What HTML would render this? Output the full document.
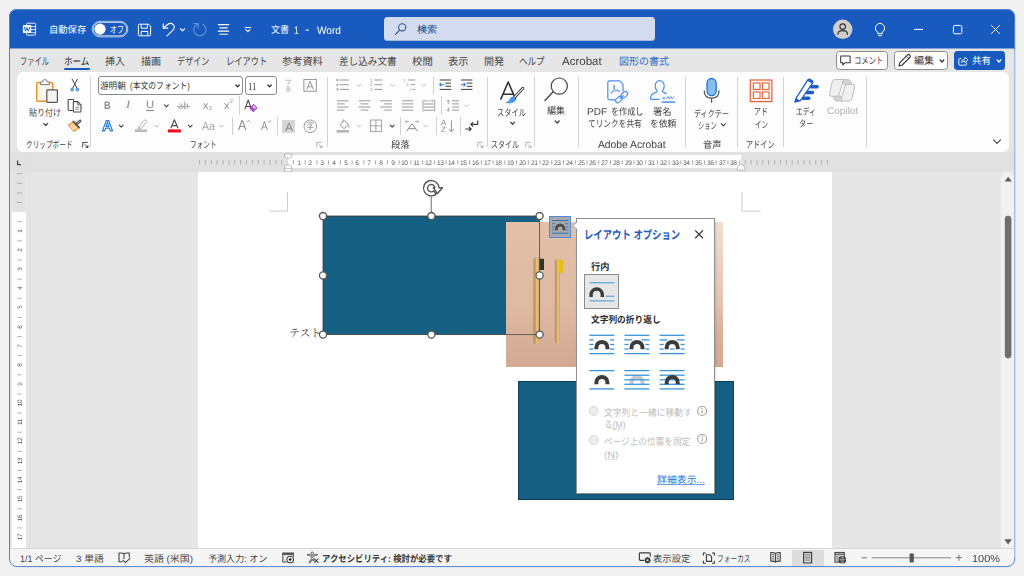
<!DOCTYPE html>
<html lang="ja"><head><meta charset="utf-8"><title>文書 1 - Word</title><style>
html,body{margin:0;padding:0;background:#f1f1f1;}
body{width:1024px;height:576px;overflow:hidden;font-family:"Liberation Sans",sans-serif;}
#page div,#page svg,#page span{position:absolute;box-sizing:border-box;}
#page{position:relative;}
#page svg{overflow:visible;display:block;}
.lt{will-change:transform;}
.lt text{white-space:pre;font-family:"Liberation Sans",sans-serif;text-rendering:geometricPrecision;}
.jt text{white-space:pre;font-family:"Liberation Sans","Noto Sans CJK JP",sans-serif;text-rendering:geometricPrecision;}
</style></head><body>
<div id="page" style="left:0px;top:0px;width:1024px;height:576px;background:#f1f1f1;overflow:hidden;">
<div id="window" style="left:9px;top:9px;width:1006px;height:558px;background:#e6e6e6;border-radius:8px;overflow:hidden;">
<div id="titlebar" style="left:0px;top:0px;width:1006px;height:39.4px;background:#185abd;">
<svg style="left:11px;top:11px" width="20" height="20" viewBox="20 20 20 20">
<rect x="26.6" y="23.2" width="9" height="12" rx="1.2" fill="none" stroke="#fff" stroke-width="0.9"/>
<path d="M31 26.6H35.4M31 29.6H35.4M31 32.7H35.4" stroke="#fff" stroke-width="0.8"/>
<rect x="22.9" y="25.1" width="8.3" height="8" rx="0.8" fill="#fff"/>
<path d="M24.4 27.2L25.6 31.2L27 27.6L28.4 31.2L29.7 27.2" fill="none" stroke="#185abd" stroke-width="1" stroke-linejoin="round" stroke-linecap="round"/>
</svg>
<svg class="jt" role="img" aria-label="自動保存" style="left:38px;top:13.27px" width="41.2" height="14.25" viewBox="47 22.27 41.2 14.25" fill="#fff"><text x="49" y="33.01" font-size="9.5" fill="#fff" text-anchor="start" textLength="37.2" lengthAdjust="spacingAndGlyphs">自動保存</text></svg>
<svg style="left:81px;top:10px" width="42" height="21" viewBox="90 19 42 21">
<rect x="92.1" y="21.25" width="35.8" height="15.7" rx="7.85" fill="none" stroke="#fff" stroke-opacity="0.85" stroke-width="0.7"/>
<rect x="93.2" y="22.35" width="33.6" height="13.5" rx="6.75" fill="none" stroke="#fff" stroke-width="0.8"/>
<circle cx="100.05" cy="29.1" r="5.6" fill="#fff"/></svg>
<svg class="jt" role="img" aria-label="オフ" style="left:99px;top:13.3px" width="18" height="14.4" viewBox="108 22.3 18 14.4" fill="#fff"><text x="110" y="33.15" font-size="9.6" fill="#fff" text-anchor="start" textLength="14" lengthAdjust="spacingAndGlyphs">オフ</text></svg>
<svg style="left:127px;top:13px" width="18" height="16" viewBox="136 22 18 16">
<path d="M139.6 24.2H148.6L150.6 26.2V34.6Q150.6 35.8 149.4 35.8H139.6Q138.4 35.8 138.4 34.6V25.4Q138.4 24.2 139.6 24.2Z" fill="none" stroke="#fff" stroke-width="1"/>
<path d="M141.2 24.4V28.2H147.4V24.4M141.2 35.6V31.4H147.8V35.6" fill="none" stroke="#fff" stroke-width="1"/></svg>
<svg style="left:151px;top:13px" width="28" height="16" viewBox="160 22 28 16">
<path d="M163.2 23.7V28.1H167.9" fill="none" stroke="#fff" stroke-width="1.1" stroke-linecap="round" stroke-linejoin="round"/>
<path d="M163.5 27.8L167.3 24.7Q170.8 22.2 173.2 24.6Q175.6 27.4 172.7 30.4L167 35.8" fill="none" stroke="#fff" stroke-width="1.1" stroke-linecap="round" stroke-linejoin="round"/><path d="M180.4 28.55L182.5 30.85L184.6 28.55" fill="none" stroke="#fff" stroke-width="1.15" stroke-linecap="round" stroke-linejoin="round"/></svg>
<svg style="left:183px;top:13px" width="16" height="16" viewBox="192 22 16 16">
<path d="M202.9 24.3A6.1 6.1 0 1 1 195.3 25.6L198 23.7" fill="none" stroke="#6a94d6" stroke-width="1.1" stroke-linecap="round" stroke-linejoin="round"/>
<path d="M193.7 23.5H198.2V28" fill="none" stroke="#6a94d6" stroke-width="1.1" stroke-linecap="round" stroke-linejoin="round"/>
</svg>
<svg style="left:207px;top:13px" width="16" height="16" viewBox="216 22 16 16"><path d="M218.4 24.6H228.7M219.9 27.85H227.3M218.4 31.05H228.7M219.9 34.25H227.3" stroke="#fff" stroke-width="1.2" stroke-linecap="round"/></svg>
<svg style="left:234px;top:16px" width="10" height="10" viewBox="243 25 10 10"><path d="M245.2 27.5H250.7" stroke="#fff" stroke-width="1.1" stroke-linecap="round"/><path d="M245.8 29.55L247.9 31.65L250 29.55" fill="none" stroke="#fff" stroke-width="1.1" stroke-linecap="round" stroke-linejoin="round"/></svg>
<svg class="jt" role="img" aria-label="文書" style="left:260.4px;top:13.3px" width="22.1" height="14.4" viewBox="269.4 22.3 22.1 14.4" fill="#fff"><text x="271.4" y="33.15" font-size="9.6" fill="#fff" text-anchor="start" textLength="18.1" lengthAdjust="spacingAndGlyphs">文書</text></svg>
<svg class="lt" style="left:282.95px;top:9.8px" width="12.76" height="21.8" viewBox="291.95 18.8 12.76 21.8"><text x="293.95" y="33.45" font-size="10.9" fill="#fff" text-anchor="start" textLength="4.77" lengthAdjust="spacingAndGlyphs">1</text></svg>
<svg class="lt" style="left:294.28px;top:9px" width="12.76" height="21.8" viewBox="303.28 18 12.76 21.8"><text x="305.28" y="32.65" font-size="10.9" fill="#fff" text-anchor="start" textLength="4.64" lengthAdjust="spacingAndGlyphs">-</text></svg>
<svg class="lt" style="left:305.86px;top:9.7px" width="32.78" height="21.6" viewBox="314.86 18.7 32.78 21.6"><text x="316.86" y="33.22" font-size="10.8" fill="#fff" text-anchor="start" textLength="23.99" lengthAdjust="spacingAndGlyphs">Word</text></svg>
<div style="left:375px;top:8px;width:270.6px;height:24.4px;background:#d2dcee;border-radius:3.5px;border-bottom:1px solid #a7b6d4;"></div>
<svg style="left:384px;top:13px" width="16" height="16" viewBox="393 22 16 16"><circle cx="402.2" cy="27.3" r="3.6" fill="none" stroke="#2a4f94" stroke-width="1.05"/>
<path d="M399.6 30.1L395.5 34.4" stroke="#2a4f94" stroke-width="1.15" stroke-linecap="round"/></svg>
<svg class="jt" role="img" aria-label="検索" style="left:406.4px;top:12.77px" width="24.2" height="14.85" viewBox="415.4 21.77 24.2 14.85" fill="#28467f"><text x="417.4" y="32.96" font-size="9.9" fill="#28467f" text-anchor="start" textLength="20.2" lengthAdjust="spacingAndGlyphs">検索</text></svg>
<svg style="left:822px;top:9px" width="24" height="24" viewBox="831 18 24 24"><circle cx="842.7" cy="29.3" r="9.7" fill="#d1cecb"/>
<circle cx="842.7" cy="26.6" r="2.8" fill="none" stroke="#333" stroke-width="1.15"/>
<path d="M837.9 34.4Q837.9 30.6 842.7 30.6Q847.5 30.6 847.5 34.4" fill="none" stroke="#333" stroke-width="1.15" stroke-linecap="round"/></svg>
<svg style="left:863px;top:12px" width="16" height="18" viewBox="872 21 16 18"><path d="M877.6 32.2Q875.4 30.6 875.4 28A4.6 4.6 0 0 1 884.6 28Q884.6 30.6 882.4 32.2V33.6H877.6Z" fill="none" stroke="#fff" stroke-width="1" stroke-linejoin="round"/>
<path d="M878.4 35.6H881.6" stroke="#fff" stroke-width="1" stroke-linecap="round"/></svg>
<svg style="left:901px;top:13px" width="96" height="16" viewBox="910 22 96 16"><path d="M914 29.4H923" stroke="#fff" stroke-width="1"/>
<rect x="953.4" y="25.4" width="8.4" height="8.4" rx="1.5" fill="none" stroke="#fff" stroke-width="1"/>
<path d="M991.2 25.2L999.8 33.8M999.8 25.2L991.2 33.8" stroke="#fff" stroke-width="1"/></svg>
</div>
<div id="tabs" style="left:0px;top:39.4px;width:1006px;height:24px;background:#e6e6e6;">
<svg class="jt" role="img" aria-label="ファイル" style="left:9px;top:4.6px" width="33" height="15.6" viewBox="18 53 33 15.6" fill="#444"><text x="20" y="64.75" font-size="10.4" fill="#444" text-anchor="start" textLength="29" lengthAdjust="spacingAndGlyphs">ファイル</text></svg>
<svg class="jt" role="img" aria-label="ホーム" style="left:53px;top:4.6px" width="29.4" height="15.6" viewBox="62 53 29.4 15.6" fill="#222"><text x="64" y="64.75" font-size="10.4" fill="#222" text-anchor="start" textLength="25.4" lengthAdjust="spacingAndGlyphs">ホーム</text></svg>
<svg class="jt" role="img" aria-label="挿入" style="left:94px;top:4.6px" width="24" height="15.6" viewBox="103 53 24 15.6" fill="#444"><text x="105" y="64.75" font-size="10.4" fill="#444" text-anchor="start" textLength="20" lengthAdjust="spacingAndGlyphs">挿入</text></svg>
<svg class="jt" role="img" aria-label="描画" style="left:130px;top:4.6px" width="24" height="15.6" viewBox="139 53 24 15.6" fill="#444"><text x="141" y="64.75" font-size="10.4" fill="#444" text-anchor="start" textLength="20" lengthAdjust="spacingAndGlyphs">描画</text></svg>
<svg class="jt" role="img" aria-label="デザイン" style="left:166px;top:4.6px" width="36.5" height="15.6" viewBox="175 53 36.5 15.6" fill="#444"><text x="177" y="64.75" font-size="10.4" fill="#444" text-anchor="start" textLength="32.5" lengthAdjust="spacingAndGlyphs">デザイン</text></svg>
<svg class="jt" role="img" aria-label="レイアウト" style="left:215.2px;top:4.6px" width="45.4" height="15.6" viewBox="224.2 53 45.4 15.6" fill="#444"><text x="226.2" y="64.75" font-size="10.4" fill="#444" text-anchor="start" textLength="41.4" lengthAdjust="spacingAndGlyphs">レイアウト</text></svg>
<svg class="jt" role="img" aria-label="参考資料" style="left:271.2px;top:4.6px" width="44.8" height="15.6" viewBox="280.2 53 44.8 15.6" fill="#444"><text x="282.2" y="64.75" font-size="10.4" fill="#444" text-anchor="start" textLength="40.8" lengthAdjust="spacingAndGlyphs">参考資料</text></svg>
<svg class="jt" role="img" aria-label="差し込み文書" style="left:328px;top:4.6px" width="61.6" height="15.6" viewBox="337 53 61.6 15.6" fill="#444"><text x="339" y="64.75" font-size="10.4" fill="#444" text-anchor="start" textLength="57.6" lengthAdjust="spacingAndGlyphs">差し込み文書</text></svg>
<svg class="jt" role="img" aria-label="校閲" style="left:401.2px;top:4.6px" width="24.8" height="15.6" viewBox="410.2 53 24.8 15.6" fill="#444"><text x="412.2" y="64.75" font-size="10.4" fill="#444" text-anchor="start" textLength="20.8" lengthAdjust="spacingAndGlyphs">校閲</text></svg>
<svg class="jt" role="img" aria-label="表示" style="left:437px;top:4.6px" width="24.4" height="15.6" viewBox="446 53 24.4 15.6" fill="#444"><text x="448" y="64.75" font-size="10.4" fill="#444" text-anchor="start" textLength="20.4" lengthAdjust="spacingAndGlyphs">表示</text></svg>
<svg class="jt" role="img" aria-label="開発" style="left:472.6px;top:4.6px" width="24" height="15.6" viewBox="481.6 53 24 15.6" fill="#444"><text x="483.6" y="64.75" font-size="10.4" fill="#444" text-anchor="start" textLength="20" lengthAdjust="spacingAndGlyphs">開発</text></svg>
<svg class="jt" role="img" aria-label="ヘルプ" style="left:508px;top:4.6px" width="29.6" height="15.6" viewBox="517 53 29.6 15.6" fill="#444"><text x="519" y="64.75" font-size="10.4" fill="#444" text-anchor="start" textLength="25.6" lengthAdjust="spacingAndGlyphs">ヘルプ</text></svg>
<div style="left:55px;top:19.8px;width:26px;height:1.9px;background:#185abd;border-radius:1px;"></div>
<svg class="lt" style="left:550.58px;top:1px" width="56.34" height="23.2" viewBox="559.58 49.4 56.34 23.2"><text x="561.58" y="64.99" font-size="11.6" fill="#444" text-anchor="start" textLength="39.71" lengthAdjust="spacingAndGlyphs">Acrobat</text></svg>
<svg class="jt" role="img" aria-label="図形の書式" style="left:608px;top:4.6px" width="54" height="15.6" viewBox="617 53 54 15.6" fill="#2f6bc4"><text x="619" y="64.75" font-size="10.4" fill="#2f6bc4" text-anchor="start" textLength="50" lengthAdjust="spacingAndGlyphs">図形の書式</text></svg>
<div style="left:0px;top:-0.4px;width:1006px;height:1px;background:#7fa0d1;"></div>
<div style="left:827px;top:2.6px;width:51.6px;height:18.6px;background:#fff;border:1px solid #8e8e8e;border-radius:3.5px;"></div>
<svg style="left:830px;top:5.6px" width="14" height="12" viewBox="839 54 14 12"><path d="M841.1 56H849.7Q850.1 56 850.1 56.4V62.4Q850.1 62.8 849.7 62.8H844.9L842.8 64.9V62.8H841.1Q840.7 62.8 840.7 62.4V56.4Q840.7 56 841.1 56Z" fill="none" stroke="#333" stroke-width="1.05" stroke-linejoin="round"/></svg>
<svg class="jt" role="img" aria-label="コメント" style="left:842.6px;top:5px" width="33.4" height="14.4" viewBox="851.6 53.4 33.4 14.4" fill="#333"><text x="853.6" y="64.25" font-size="9.6" fill="#333" text-anchor="start" textLength="29.4" lengthAdjust="spacingAndGlyphs">コメント</text></svg>
<div style="left:885px;top:2.6px;width:53.6px;height:18.6px;background:#fff;border:1px solid #8e8e8e;border-radius:3.5px;"></div>
<svg style="left:888px;top:4.6px" width="16" height="15" viewBox="897 53 16 15"><path d="M899 66L899.9 62.6L907.6 54.9Q908.6 53.9 909.8 55.1Q910.9 56.3 909.9 57.3L902.2 65Z" fill="none" stroke="#333" stroke-width="1.15" stroke-linejoin="round"/>
<path d="M906.4 56.2L908.7 58.5" stroke="#333" stroke-width="0.9"/></svg>
<svg class="jt" role="img" aria-label="編集" style="left:903px;top:4.7px" width="24" height="15" viewBox="912 53.1 24 15" fill="#333"><text x="914" y="64.4" font-size="10" fill="#333" text-anchor="start" textLength="20" lengthAdjust="spacingAndGlyphs">編集</text></svg>
<svg style="left:929px;top:8.6px" width="8" height="7" viewBox="938 57 8 7"><path d="M940.2 60L942 62L943.8 60" fill="none" stroke="#333" stroke-width="1.3" stroke-linecap="round" stroke-linejoin="round"/></svg>
<div style="left:945px;top:2.6px;width:51px;height:18.6px;background:#185abd;border-radius:3.5px;"></div>
<svg style="left:947px;top:5.6px" width="14" height="13" viewBox="956 54 14 13"><path d="M961 58.6H959.8Q958.8 58.6 958.8 59.6V64.2Q958.8 65.2 959.8 65.2H965.6Q966.6 65.2 966.6 64.2V63.2" fill="none" stroke="#fff" stroke-width="0.9" stroke-linecap="round"/>
<path d="M961.4 62.6Q961.8 59.2 965 59V57L968 60L965 62.8V61Q962.8 61 961.4 62.6Z" fill="none" stroke="#fff" stroke-width="0.8" stroke-linejoin="round"/></svg>
<svg class="jt" role="img" aria-label="共有" style="left:961px;top:4.77px" width="23" height="14.85" viewBox="970 53.17 23 14.85" fill="#fff"><text x="972" y="64.36" font-size="9.9" fill="#fff" text-anchor="start" textLength="19" lengthAdjust="spacingAndGlyphs">共有</text></svg>
<svg style="left:986px;top:8.6px" width="8" height="7" viewBox="995 57 8 7"><path d="M997.2 60L999 62L1000.8 60" fill="none" stroke="#fff" stroke-width="1.3" stroke-linecap="round" stroke-linejoin="round"/></svg>
</div>
<div id="ribbon" style="left:7.5px;top:63.4px;width:992px;height:80.1px;background:#fdfdfd;border-radius:6px;">
<svg style="left:17.5px;top:4.6px" width="26" height="28" viewBox="34 77 26 28">
<rect x="36.7" y="82.5" width="16" height="18.7" rx="1" fill="#fff7ea" stroke="#ef8f2b" stroke-width="1.4"/>
<path d="M40.4 84.6V82.6Q40.4 82 41 82H42.4Q42.6 79.6 44.9 79.6Q47.2 79.6 47.4 82H48.8Q49.4 82 49.4 82.6V84.6Z" fill="#fff" stroke="#777" stroke-width="1"/>
<rect x="46.8" y="89.8" width="10.6" height="12.6" rx="0.8" fill="#f3f3f3" stroke="#555" stroke-width="1.2"/></svg>
<svg class="jt" role="img" aria-label="貼り付け" style="left:10.1px;top:32.77px" width="36" height="14.25" viewBox="26.6 105.17 36 14.25" fill="#444"><text x="28.6" y="115.91" font-size="9.5" fill="#444" text-anchor="start" textLength="32" lengthAdjust="spacingAndGlyphs">貼り付け</text></svg>
<svg style="left:25.5px;top:48.6px" width="8" height="7" viewBox="42 121 8 7"><path d="M43.75 123.35L45.75 125.45L47.75 123.35" fill="none" stroke="#444" stroke-width="1.25" stroke-linecap="round" stroke-linejoin="round"/></svg>
<svg style="left:51.5px;top:5.6px" width="13" height="15" viewBox="68 78 13 15">
<path d="M72.2 79.2L77 88.3M77.4 79.2L72.6 88.3" stroke="#444" stroke-width="1" stroke-linecap="round"/>
<circle cx="72.1" cy="89.6" r="1.45" fill="#7ab8ea" stroke="#2f7fd8" stroke-width="0.8"/>
<circle cx="77.4" cy="89.6" r="1.45" fill="#7ab8ea" stroke="#2f7fd8" stroke-width="0.8"/></svg>
<svg style="left:50.5px;top:25.6px" width="16" height="15" viewBox="67 98 16 15">
<path d="M72.8 110.4H69.1Q68.2 110.4 68.2 109.5V100.3Q68.2 99.4 69.1 99.4H72.8Q73.7 99.4 73.7 100.3V101.3" fill="none" stroke="#444" stroke-width="1.05"/>
<path d="M73.3 102.4Q73.3 101.6 74.1 101.6H77.7L81 104.9V111.2Q81 112 80.2 112H74.1Q73.3 112 73.3 111.2Z" fill="#fff" stroke="#444" stroke-width="1.05" stroke-linejoin="round"/>
<path d="M77.7 101.8V104.9H80.8" fill="none" stroke="#444" stroke-width="0.8"/>
<path d="M75.3 107.3H79.1M75.3 109.2H79.1" stroke="#666" stroke-width="0.8"/></svg>
<svg style="left:50.5px;top:45.6px" width="16" height="15" viewBox="67 118 16 15">
<path d="M68.4 124.9L72.9 121.9L78.6 128.1L74 131.3Z" fill="#f9cf9c" stroke="#ef8f2b" stroke-width="1.1" stroke-linejoin="round"/>
<path d="M70.6 126.4L73.4 129.6" stroke="#fff" stroke-width="0.9"/>
<path d="M73.4 121.4L79.2 127.6" stroke="#444" stroke-width="1.5" stroke-linecap="round"/>
<path d="M76.8 123.8L80.1 120.9" stroke="#444" stroke-width="2.7" stroke-linecap="round"/>
<path d="M77.2 123.4L80 121" stroke="#e4e4e4" stroke-width="0.8" stroke-linecap="round"/></svg>
<svg class="jt" role="img" aria-label="クリップボード" style="left:7.5px;top:64.78px" width="50.6" height="14.25" viewBox="24 137.18 50.6 14.25" fill="#444"><text x="26" y="147.92" font-size="9.5" fill="#444" text-anchor="start" textLength="46.6" lengthAdjust="spacingAndGlyphs">クリップボード</text></svg>
<svg style="left:65.1px;top:69.2px" width="7" height="7" viewBox="81.6 141.6 7 7"><path d="M87.3 142H82.3V147" fill="none" stroke="#4a4a4a" stroke-width="1"/><path d="M84 143.6L87.2 146.8" fill="none" stroke="#4a4a4a" stroke-width="1"/><path d="M88 144.4V147.6H84.8Z" fill="#4a4a4a"/></svg>
<div style="left:73.5px;top:4.6px;width:1px;height:70.5px;background:#d2d2d2;"></div>
<div style="left:81.5px;top:3.2px;width:144.6px;height:19px;background:#fff;border:1px solid #8a8a8a;border-radius:3px;"></div>
<svg class="jt" role="img" aria-label="游明朝" style="left:81.7px;top:6.22px" width="29.8" height="13.95" viewBox="98.2 78.62 29.8 13.95" fill="#333"><text x="100.2" y="89.13" font-size="9.3" fill="#333" text-anchor="start" textLength="25.8" lengthAdjust="spacingAndGlyphs">游明朝</text></svg>
<svg class="jt" role="img" aria-label="(本文のフォント)" style="left:111.5px;top:6.22px" width="64" height="13.95" viewBox="128 78.62 64 13.95" fill="#333"><text x="130" y="89.13" font-size="9.3" fill="#333" text-anchor="start" textLength="60" lengthAdjust="spacingAndGlyphs">(本文のフォント)</text></svg>
<svg style="left:217.5px;top:10.6px" width="8" height="6" viewBox="234 83 8 6"><path d="M235.9 84.95L237.6 86.85L239.3 84.95" fill="none" stroke="#333" stroke-width="1.3" stroke-linecap="round" stroke-linejoin="round"/></svg>
<div style="left:228.9px;top:3.2px;width:31.2px;height:19px;background:#fff;border:1px solid #8a8a8a;border-radius:3px;"></div>
<svg class="lt" style="left:229.46px;top:2.2px" width="19.64" height="22" viewBox="245.96 74.6 19.64 22"><text x="247.96" y="89.38" font-size="11" fill="#333" text-anchor="start" textLength="8.45" lengthAdjust="spacingAndGlyphs" style="font-family:'Liberation Serif',serif;">11</text></svg>
<svg style="left:249.5px;top:10.6px" width="8" height="6" viewBox="266 83 8 6"><path d="M267.9 84.95L269.6 86.85L271.3 84.95" fill="none" stroke="#333" stroke-width="1.3" stroke-linecap="round" stroke-linejoin="round"/></svg>
<svg style="left:266.5px;top:5.6px" width="12" height="15" viewBox="283 78 12 15"><path d="M285.4 80.4H290.6Q290 82.6 288 83.6M288 82.4V85" fill="none" stroke="#b0b0b0" stroke-width="0.8"/>
<path d="M286 87H290.4M285.4 89H291M286 91H290.4M288.2 86.4V91" fill="none" stroke="#b0b0b0" stroke-width="0.7"/></svg>
<svg style="left:285.5px;top:4.6px" width="16" height="16" viewBox="302 77 16 16"><rect x="303.9" y="79.4" width="12.4" height="11.8" fill="none" stroke="#8a8a8a" stroke-width="0.9"/>
<path d="M306.8 89.4L310.1 81.2L313.4 89.4M307.9 86.8H312.3" fill="none" stroke="#8a8a8a" stroke-width="0.9"/></svg>
<svg class="lt" style="left:85.79px;top:21.4px" width="12.76" height="21.8" viewBox="102.29 93.8 12.76 21.8"><text x="104.29" y="108.45" font-size="10.9" fill="#8c8c8c" text-anchor="start" textLength="6.63" lengthAdjust="spacingAndGlyphs" style="font-weight:bold;">B</text></svg>
<svg class="lt" style="left:107.95px;top:21.1px" width="12.94" height="22.4" viewBox="124.45 93.5 12.94 22.4"><text x="126.45" y="108.55" font-size="11.2" fill="#8c8c8c" text-anchor="start" textLength="4.25" lengthAdjust="spacingAndGlyphs" style="font-style:italic;font-family:'Liberation Serif',serif;">I</text></svg>
<svg class="lt" style="left:127.63px;top:21.8px" width="12.57" height="21.2" viewBox="144.13 94.2 12.57 21.2"><text x="146.13" y="108.45" font-size="10.6" fill="#8c8c8c" text-anchor="start" textLength="8.14" lengthAdjust="spacingAndGlyphs">U</text></svg>
<div style="left:129.9px;top:37.2px;width:7.4px;height:0.8px;background:#8c8c8c;"></div>
<svg style="left:145.5px;top:29.6px" width="9" height="7" viewBox="162 102 9 7"><path d="M164.5 104.8L166.4 106.8L168.3 104.8" fill="none" stroke="#444" stroke-width="1.1" stroke-linecap="round" stroke-linejoin="round"/></svg>
<svg class="lt" style="left:159.9px;top:22.2px" width="18.9" height="20.8" viewBox="176.4 94.6 18.9 20.8"><text x="178.4" y="108.58" font-size="10.4" fill="#a4a4a4" text-anchor="start" textLength="10.39" lengthAdjust="spacingAndGlyphs">ab</text></svg>
<div style="left:160.9px;top:33.7px;width:12.6px;height:0.8px;background:#a4a4a4;"></div>
<svg class="lt" style="left:184.38px;top:21.2px" width="12.82" height="22" viewBox="200.88 93.6 12.82 22"><text x="202.88" y="108.38" font-size="11" fill="#8c8c8c" text-anchor="start" textLength="5.44" lengthAdjust="spacingAndGlyphs">x</text></svg>
<svg class="lt" style="left:190.24px;top:30.8px" width="9.35" height="10.8" viewBox="206.74 103.2 9.35 10.8"><text x="208.74" y="110.46" font-size="5.4" fill="#8c8c8c" text-anchor="start" textLength="2.93" lengthAdjust="spacingAndGlyphs">2</text></svg>
<svg class="lt" style="left:205.78px;top:21.2px" width="12.82" height="22" viewBox="222.28 93.6 12.82 22"><text x="224.28" y="108.38" font-size="11" fill="#8c8c8c" text-anchor="start" textLength="5.44" lengthAdjust="spacingAndGlyphs">x</text></svg>
<svg class="lt" style="left:211.44px;top:24.1px" width="9.35" height="10.8" viewBox="227.94 96.5 9.35 10.8"><text x="229.94" y="103.76" font-size="5.4" fill="#8c8c8c" text-anchor="start" textLength="2.93" lengthAdjust="spacingAndGlyphs">2</text></svg>
<div style="left:222.6px;top:23.6px;width:1px;height:18.6px;background:#d2d2d2;"></div>
<svg style="left:226.5px;top:25.6px" width="16" height="15" viewBox="243 98 16 15"><path d="M244.8 109.4L248.2 100L251.6 109.4M246 106.4H250.4" fill="none" stroke="#444" stroke-width="1.05" stroke-linejoin="round"/>
<path d="M250 108.2L253.6 104.6L256.8 107.8L253.2 111.4Z" fill="#fff" stroke="#a23cc4" stroke-width="1.1" stroke-linejoin="round"/>
<path d="M250 108.2L251.9 106.3L255.1 109.5L253.2 111.4Z" fill="#b455d3" stroke="#a23cc4" stroke-width="0.6" stroke-linejoin="round"/></svg>
<svg style="left:83.5px;top:45.6px" width="16" height="16" viewBox="100 118 16 16"><path d="M110.37 130.9L109.47 128.26L105.56 128.26L104.65 130.9L102.5 130.9L106.24 120.58L108.77 120.58L112.5 130.9ZM107.51 122.17L107.46 122.33Q107.39 122.59 107.29 122.93Q107.19 123.27 106.04 126.64L108.98 126.64L107.97 123.67L107.66 122.67Z" fill="#fff" stroke="#1f78d1" stroke-width="1.15" stroke-linejoin="round"/></svg>
<svg style="left:100.5px;top:49.6px" width="9" height="8" viewBox="117 122 9 8"><path d="M119.3 125.2L121.2 127.2L123.1 125.2" fill="none" stroke="#444" stroke-width="1.1" stroke-linecap="round" stroke-linejoin="round"/></svg>
<svg style="left:116.5px;top:45.6px" width="16" height="16" viewBox="133 118 16 16"><path d="M138.6 127.2L144 120.4Q145 119.4 146 120.4Q147 121.4 146.2 122.4L141 128.6Z" fill="none" stroke="#a8a8a8" stroke-width="0.9" stroke-linejoin="round"/>
<path d="M138.6 127.2L137.6 129.2H140.4L141 128.6" fill="none" stroke="#a8a8a8" stroke-width="0.9" stroke-linejoin="round"/>
<rect x="134.8" y="129.5" width="12.2" height="2.6" fill="#b9b9b9"/></svg>
<svg style="left:136.5px;top:49.6px" width="8" height="8" viewBox="153 122 8 8"><path d="M155.2 125.25L157 127.15L158.8 125.25" fill="none" stroke="#b4b4b4" stroke-width="0.9" stroke-linecap="round" stroke-linejoin="round"/></svg>
<svg style="left:149.5px;top:45.6px" width="16" height="16" viewBox="166 118 16 16"><path d="M170.8 128.3L174.4 119.8L178 128.3M172 125.6H176.8" fill="none" stroke="#444" stroke-width="1.05" stroke-linejoin="round"/>
<rect x="167.9" y="129.4" width="13" height="3.1" fill="#e8121d"/></svg>
<svg style="left:169.5px;top:49.6px" width="9" height="8" viewBox="186 122 9 8"><path d="M188.3 125.2L190.2 127.2L192.1 125.2" fill="none" stroke="#444" stroke-width="1.1" stroke-linecap="round" stroke-linejoin="round"/></svg>
<svg class="lt" style="left:183.08px;top:42px" width="20.63" height="23.6" viewBox="199.58 114.4 20.63 23.6"><text x="201.58" y="130.26" font-size="11.8" fill="#a6a6a6" text-anchor="start" textLength="12.82" lengthAdjust="spacingAndGlyphs">Aa</text></svg>
<svg style="left:200.5px;top:49.6px" width="8" height="8" viewBox="217 122 8 8"><path d="M219.4 125.25L221.2 127.15L223 125.25" fill="none" stroke="#b4b4b4" stroke-width="0.9" stroke-linecap="round" stroke-linejoin="round"/></svg>
<div style="left:215px;top:44.6px;width:1px;height:18px;background:#d2d2d2;"></div>
<svg class="lt" style="left:219.48px;top:38.5px" width="14.93" height="28.8" viewBox="235.98 110.9 14.93 28.8"><text x="237.98" y="130.25" font-size="14.4" fill="#8e8e8e" text-anchor="start" textLength="8.45" lengthAdjust="spacingAndGlyphs">A</text></svg>
<svg style="left:228.5px;top:45.6px" width="7" height="6" viewBox="245 118 7 6"><path d="M247 122.2L248.6 120.4L250.2 122.2" fill="none" stroke="#8e8e8e" stroke-width="0.8"/></svg>
<svg class="lt" style="left:242.08px;top:41.5px" width="13.56" height="24.4" viewBox="258.58 113.9 13.56 24.4"><text x="260.58" y="130.3" font-size="12.2" fill="#8e8e8e" text-anchor="start" textLength="6.84" lengthAdjust="spacingAndGlyphs">A</text></svg>
<svg style="left:249.5px;top:45.6px" width="7" height="6" viewBox="266 118 7 6"><path d="M268 120.6L269.5 122.3L271 120.6" fill="none" stroke="#8e8e8e" stroke-width="0.8"/></svg>
<div style="left:260px;top:44.6px;width:1px;height:18px;background:#d2d2d2;"></div>
<div style="left:265.5px;top:47.6px;width:13.2px;height:12.6px;background:#d6d6d6;"></div>
<svg class="lt" style="left:266.08px;top:42.4px" width="13.19" height="23.2" viewBox="282.58 114.8 13.19 23.2"><text x="284.58" y="130.39" font-size="11.6" fill="#8a8a8a" text-anchor="start" textLength="8.05" lengthAdjust="spacingAndGlyphs">A</text></svg>
<svg style="left:285.5px;top:45.6px" width="17" height="17" viewBox="302 118 17 17"><circle cx="310.3" cy="126.3" r="6.3" fill="none" stroke="#8c8c8c" stroke-width="0.9"/><path d="M307.4 123.6V122.8H313.2V123.6M310.3 121.6V122.8M308.4 124.8H312L310.4 126.2V129.6Q310.4 130.2 309.4 130M307.2 127.4H313.4" fill="none" stroke="#8c8c8c" stroke-width="0.75"/></svg>
<svg class="jt" role="img" aria-label="フォント" style="left:171.1px;top:64.78px" width="30.6" height="14.25" viewBox="187.6 137.18 30.6 14.25" fill="#444"><text x="189.6" y="147.92" font-size="9.5" fill="#444" text-anchor="start" textLength="26.6" lengthAdjust="spacingAndGlyphs">フォント</text></svg>
<svg style="left:299.5px;top:69.2px" width="7" height="7" viewBox="316 141.6 7 7"><path d="M321.7 142H316.7V147" fill="none" stroke="#b4b4b4" stroke-width="1"/><path d="M318.4 143.6L321.6 146.8" fill="none" stroke="#b4b4b4" stroke-width="1"/><path d="M322.4 144.4V147.6H319.2Z" fill="#b4b4b4"/></svg>
<div style="left:310px;top:4.6px;width:1px;height:70.5px;background:#d2d2d2;"></div>
<svg style="left:318.5px;top:5.6px" width="28" height="15" viewBox="335 78 28 15"><path d="M339.8 80H348.8" stroke="#9a9a9a" stroke-width="1"/><path d="M339.8 84.7H348.8" stroke="#9a9a9a" stroke-width="1"/><path d="M339.8 89.4H348.8" stroke="#9a9a9a" stroke-width="1"/><rect x="336.5" y="79.05" width="1.9" height="1.9" fill="#9a9a9a"/><rect x="336.5" y="83.75" width="1.9" height="1.9" fill="#9a9a9a"/><rect x="336.5" y="88.45" width="1.9" height="1.9" fill="#9a9a9a"/><path d="M357.1 84.4L359 86.4L360.9 84.4" fill="none" stroke="#b4b4b4" stroke-width="0.9" stroke-linecap="round" stroke-linejoin="round"/></svg>
<svg style="left:351.5px;top:5.6px" width="30" height="15" viewBox="368 78 30 15"><path d="M374.4 80H382.3" stroke="#9a9a9a" stroke-width="1"/><path d="M374.4 84.7H382.3" stroke="#9a9a9a" stroke-width="1"/><path d="M374.4 89.4H382.3" stroke="#9a9a9a" stroke-width="1"/><path d="M390.7 84.4L392.6 86.4L394.5 84.4" fill="none" stroke="#b4b4b4" stroke-width="0.9" stroke-linecap="round" stroke-linejoin="round"/></svg>
<svg class="lt" style="left:351.3px;top:3.2px" width="8.85" height="9.2" viewBox="367.8 75.6 8.85 9.2"><text x="369.8" y="81.78" font-size="4.6" fill="#a2a2a2" text-anchor="start">1</text></svg>
<svg class="lt" style="left:351.3px;top:7.9px" width="8.85" height="9.2" viewBox="367.8 80.3 8.85 9.2"><text x="369.8" y="86.48" font-size="4.6" fill="#a2a2a2" text-anchor="start">2</text></svg>
<svg class="lt" style="left:351.3px;top:12.6px" width="8.85" height="9.2" viewBox="367.8 85 8.85 9.2"><text x="369.8" y="91.18" font-size="4.6" fill="#a2a2a2" text-anchor="start">3</text></svg>
<svg style="left:385.5px;top:5.6px" width="28" height="15" viewBox="402 78 28 15"><path d="M407.8 80H415.2M410.6 84.7H415.2M412.2 89.4H415.2" stroke="#9a9a9a" stroke-width="1" fill="none"/><path d="M421.7 84.4L423.6 86.4L425.5 84.4" fill="none" stroke="#b4b4b4" stroke-width="0.9" stroke-linecap="round" stroke-linejoin="round"/></svg>
<svg class="lt" style="left:384.9px;top:3.2px" width="8.85" height="9.2" viewBox="401.4 75.6 8.85 9.2"><text x="403.4" y="81.78" font-size="4.6" fill="#a2a2a2" text-anchor="start">1</text></svg>
<svg class="lt" style="left:387.9px;top:7.7px" width="8.85" height="9.2" viewBox="404.4 80.1 8.85 9.2"><text x="406.4" y="86.28" font-size="4.6" fill="#a2a2a2" text-anchor="start">a</text></svg>
<svg class="lt" style="left:391.3px;top:12.4px" width="8.85" height="9.2" viewBox="407.8 84.8 8.85 9.2"><text x="409.8" y="90.98" font-size="4.6" fill="#a2a2a2" text-anchor="start">i</text></svg>
<div style="left:416.5px;top:4.6px;width:1px;height:17px;background:#d2d2d2;"></div>
<svg style="left:421.5px;top:5.6px" width="15" height="15" viewBox="438 78 15 15"><path d="M439.7 80H451.1" stroke="#444" stroke-width="1.05"/><path d="M439.7 89.4H451.1" stroke="#444" stroke-width="1.05"/><path d="M445.3 83.1H451.1" stroke="#444" stroke-width="1.05"/><path d="M445.3 86.3H451.1" stroke="#444" stroke-width="1.05"/><path d="M444.3 84.7H439.7M441.4 83L439.6 84.7L441.4 86.4" fill="none" stroke="#2f7fd8" stroke-width="1.05" stroke-linejoin="round"/></svg>
<svg style="left:442.5px;top:5.6px" width="15" height="15" viewBox="459 78 15 15"><path d="M461 80H472.4" stroke="#444" stroke-width="1.05"/><path d="M461 89.4H472.4" stroke="#444" stroke-width="1.05"/><path d="M466.6 83.1H472.4" stroke="#444" stroke-width="1.05"/><path d="M466.6 86.3H472.4" stroke="#444" stroke-width="1.05"/><path d="M460.8 84.7H465.2M463.6 83L465.4 84.7L463.6 86.4" fill="none" stroke="#2f7fd8" stroke-width="1.05" stroke-linejoin="round"/></svg>
<svg style="left:319.5px;top:25.6px" width="14" height="14" viewBox="336 98 14 14"><path d="M337 100.8H348.4" stroke="#9a9a9a" stroke-width="1"/><path d="M337 107H348.4" stroke="#9a9a9a" stroke-width="1"/><path d="M337 103.9H344.6" stroke="#9a9a9a" stroke-width="1"/><path d="M337 110.1H344.6" stroke="#9a9a9a" stroke-width="1"/></svg>
<svg style="left:340.5px;top:25.6px" width="14" height="14" viewBox="357 98 14 14"><path d="M358.6 100.8H370.4" stroke="#9a9a9a" stroke-width="1"/><path d="M358.6 107H370.4" stroke="#9a9a9a" stroke-width="1"/><path d="M360.6 103.9H368.4" stroke="#9a9a9a" stroke-width="1"/><path d="M360.6 110.1H368.4" stroke="#9a9a9a" stroke-width="1"/></svg>
<svg style="left:362.5px;top:25.6px" width="14" height="14" viewBox="379 98 14 14"><path d="M380.2 100.8H391.8" stroke="#9a9a9a" stroke-width="1"/><path d="M380.2 107H391.8" stroke="#9a9a9a" stroke-width="1"/><path d="M384.2 103.9H391.8" stroke="#9a9a9a" stroke-width="1"/><path d="M384.2 110.1H391.8" stroke="#9a9a9a" stroke-width="1"/></svg>
<svg style="left:384.5px;top:25.6px" width="14" height="14" viewBox="401 98 14 14"><path d="M402 100.8H413.4" stroke="#9a9a9a" stroke-width="1"/><path d="M402 103.9H413.4" stroke="#9a9a9a" stroke-width="1"/><path d="M402 107H413.4" stroke="#9a9a9a" stroke-width="1"/><path d="M402 110.1H413.4" stroke="#9a9a9a" stroke-width="1"/></svg>
<svg style="left:404.5px;top:25.6px" width="16" height="14" viewBox="421 98 16 14"><path d="M423.8 104H433.9" stroke="#9a9a9a" stroke-width="1"/><path d="M423.8 107.1H433.9" stroke="#9a9a9a" stroke-width="1"/><path d="M423.8 110.25H433.9" stroke="#9a9a9a" stroke-width="1"/><path d="M423 99.8V111.5M434.7 99.8V111.5" stroke="#9a9a9a" stroke-width="0.9" fill="none"/><path d="M424.4 100.9H433.3M425.6 99.8L424.4 100.9L425.6 102M432.1 99.8L433.3 100.9L432.1 102" stroke="#9a9a9a" stroke-width="0.7" fill="none"/></svg>
<div style="left:424.5px;top:23.6px;width:1px;height:18.6px;background:#d2d2d2;"></div>
<svg style="left:428.5px;top:25.6px" width="26" height="14" viewBox="445 98 26 14"><path d="M452 100.8H459" stroke="#9a9a9a" stroke-width="1"/><path d="M452 103.9H459" stroke="#9a9a9a" stroke-width="1"/><path d="M452 107H459" stroke="#9a9a9a" stroke-width="1"/><path d="M452 110.1H459" stroke="#9a9a9a" stroke-width="1"/><path d="M448.3 100V104.2M446.7 101.7L448.3 100L449.9 101.7M448.3 107V111.3M446.7 109.6L448.3 111.3L449.9 109.6" fill="none" stroke="#9a9a9a" stroke-width="0.85"/><path d="M464.5 104.8L466.4 106.8L468.3 104.8" fill="none" stroke="#b4b4b4" stroke-width="0.9" stroke-linecap="round" stroke-linejoin="round"/></svg>
<svg style="left:318.5px;top:45.6px" width="28" height="16" viewBox="335 118 28 16"><path d="M340 124.6L344.4 120.4L348.2 124.4L344 128.8Z" fill="none" stroke="#8c8c8c" stroke-width="0.9" stroke-linejoin="round"/>
<path d="M342.8 122V120.6Q342.8 119.6 343.8 119.6M348.4 125.2Q349.4 126.8 348.6 127.6" fill="none" stroke="#8c8c8c" stroke-width="0.8"/>
<rect x="336.6" y="130" width="12.4" height="2.6" fill="#b4b4b4"/><path d="M357.2 125.05L359 126.95L360.8 125.05" fill="none" stroke="#b4b4b4" stroke-width="0.9" stroke-linecap="round" stroke-linejoin="round"/></svg>
<svg style="left:351.5px;top:45.6px" width="30" height="16" viewBox="368 118 30 16"><rect x="370.4" y="120" width="11" height="11.6" fill="none" stroke="#9a9a9a" stroke-width="0.9"/><path d="M375.9 120V131.6M370.4 125.8H381.4" stroke="#9a9a9a" stroke-width="0.9"/><path d="M390.3 125.2L392.2 127.2L394.1 125.2" fill="none" stroke="#444" stroke-width="1.1" stroke-linecap="round" stroke-linejoin="round"/></svg>
<div style="left:383.5px;top:44.6px;width:1px;height:18px;background:#d2d2d2;"></div>
<svg style="left:386.5px;top:45.6px" width="28" height="16" viewBox="403 118 28 16"><path d="M406.3 131.4L412 123.7L417.7 131.4M408.4 128.7H415.6" fill="none" stroke="#8c8c8c" stroke-width="1" stroke-linejoin="round"/>
<path d="M405.5 121.6H409M406.7 120.4L405.5 121.6L406.7 122.8M415 121.6H418.5M417.3 120.4L418.5 121.6L417.3 122.8" fill="none" stroke="#8c8c8c" stroke-width="0.7"/><path d="M423.7 125L425.6 127L427.5 125" fill="none" stroke="#b4b4b4" stroke-width="0.9" stroke-linecap="round" stroke-linejoin="round"/></svg>
<div style="left:419.5px;top:44.6px;width:1px;height:18px;background:#d2d2d2;"></div>
<svg class="lt" style="left:422.7px;top:42.7px" width="10.84" height="15.6" viewBox="439.2 115.1 10.84 15.6"><text x="441.2" y="125.58" font-size="7.8" fill="#8c8c8c" text-anchor="start">A</text></svg>
<svg class="lt" style="left:422.9px;top:49.7px" width="10.84" height="15.6" viewBox="439.4 122.1 10.84 15.6"><text x="441.4" y="132.58" font-size="7.8" fill="#8c8c8c" text-anchor="start">Z</text></svg>
<svg style="left:430.5px;top:45.6px" width="8" height="16" viewBox="447 118 8 16"><path d="M451.4 120.4V131.8M449 129.2L451.4 131.9L453.8 129.2" fill="none" stroke="#8c8c8c" stroke-width="0.95"/></svg>
<div style="left:443.5px;top:44.6px;width:1px;height:18px;background:#d2d2d2;"></div>
<svg style="left:447.5px;top:45.6px" width="16" height="16" viewBox="464 118 16 16"><path d="M477.7 120.4V124.4H471M473.2 122.2L470.8 124.4L473.2 126.6" fill="none" stroke="#3c3c3c" stroke-width="1.15" stroke-linejoin="round"/>
<path d="M465.2 129H471M468.9 126.8L471.2 129L468.9 131.2" fill="none" stroke="#3c3c3c" stroke-width="1.15" stroke-linejoin="round"/></svg>
<svg class="jt" role="img" aria-label="段落" style="left:372.9px;top:64.78px" width="22.6" height="14.25" viewBox="389.4 137.18 22.6 14.25" fill="#444"><text x="391.4" y="147.92" font-size="9.5" fill="#444" text-anchor="start" textLength="18.6" lengthAdjust="spacingAndGlyphs">段落</text></svg>
<svg style="left:460.1px;top:69.2px" width="7" height="7" viewBox="476.6 141.6 7 7"><path d="M482.3 142H477.3V147" fill="none" stroke="#b4b4b4" stroke-width="1"/><path d="M479 143.6L482.2 146.8" fill="none" stroke="#b4b4b4" stroke-width="1"/><path d="M483 144.4V147.6H479.8Z" fill="#b4b4b4"/></svg>
<div style="left:470.5px;top:4.6px;width:1px;height:70.5px;background:#d2d2d2;"></div>
<svg style="left:481.5px;top:6.6px" width="28" height="26" viewBox="498 79 28 26"><path d="M500.6 99.6L508.2 82L515.8 99.6M503.4 94.3H513" fill="none" stroke="#333" stroke-width="1.6" stroke-linejoin="round"/>
<path d="M522.9 88.3L514.4 97.4" stroke="#333" stroke-width="2.9" stroke-linecap="round"/>
<path d="M522.9 88.3L514.6 97.2" stroke="#fff" stroke-width="1.1" stroke-linecap="round"/>
<path d="M505.8 102.7Q508.6 102 509.6 99.7Q510.6 96.7 513.4 97Q516 97.6 515.3 100.1Q514.2 103.8 505.8 102.7Z" fill="#4a9ae6" stroke="#2f7fd8" stroke-width="0.5"/></svg>
<svg class="jt" role="img" aria-label="スタイル" style="left:478.5px;top:32.27px" width="33" height="14.25" viewBox="495 104.67 33 14.25" fill="#444"><text x="497" y="115.41" font-size="9.5" fill="#444" text-anchor="start" textLength="29" lengthAdjust="spacingAndGlyphs">スタイル</text></svg>
<svg style="left:492.5px;top:47.6px" width="8" height="6" viewBox="509 120 8 6"><path d="M510.6 122.15L512.6 124.25L514.6 122.15" fill="none" stroke="#444" stroke-width="1.25" stroke-linecap="round" stroke-linejoin="round"/></svg>
<svg class="jt" role="img" aria-label="スタイル" style="left:472.5px;top:64.78px" width="32" height="14.25" viewBox="489 137.18 32 14.25" fill="#444"><text x="491" y="147.92" font-size="9.5" fill="#444" text-anchor="start" textLength="28" lengthAdjust="spacingAndGlyphs">スタイル</text></svg>
<svg style="left:508.9px;top:69.2px" width="7" height="7" viewBox="525.4 141.6 7 7"><path d="M531.1 142H526.1V147" fill="none" stroke="#b4b4b4" stroke-width="1"/><path d="M527.8 143.6L531 146.8" fill="none" stroke="#b4b4b4" stroke-width="1"/><path d="M531.8 144.4V147.6H528.6Z" fill="#b4b4b4"/></svg>
<div style="left:517px;top:4.6px;width:1px;height:70.5px;background:#d2d2d2;"></div>
<svg style="left:526.5px;top:4.6px" width="26" height="26" viewBox="543 77 26 26"><circle cx="559.3" cy="86.1" r="8.1" fill="none" stroke="#444" stroke-width="1.2"/><path d="M553.2 91.8L544.9 100.5" stroke="#444" stroke-width="1.3" stroke-linecap="round"/></svg>
<svg class="jt" role="img" aria-label="編集" style="left:528.5px;top:30.27px" width="22" height="14.25" viewBox="545 102.67 22 14.25" fill="#444"><text x="547" y="113.41" font-size="9.5" fill="#444" text-anchor="start" textLength="18" lengthAdjust="spacingAndGlyphs">編集</text></svg>
<svg style="left:536.5px;top:46.6px" width="8" height="6" viewBox="553 119 8 6"><path d="M555.2 120.95L557.2 123.05L559.2 120.95" fill="none" stroke="#444" stroke-width="1.25" stroke-linecap="round" stroke-linejoin="round"/></svg>
<div style="left:561px;top:4.6px;width:1px;height:70.5px;background:#d2d2d2;"></div>
<svg style="left:588.5px;top:5.6px" width="26" height="26" viewBox="605 78 26 26"><path d="M615.4 99.8H609.6Q607.8 99.8 607.8 98V82.7Q607.8 80.9 609.6 80.9H619.6L623 84.3V91.4" fill="none" stroke="#4c8cf2" stroke-width="1.2" stroke-linejoin="round"/>
<path d="M611 93.4Q613.8 90.4 614.4 86.4Q614.6 84.8 613.9 84.8Q613.2 84.8 613.5 86.6Q614.2 90 618.6 91.4Q619.8 91.6 619.6 90.9Q619.2 90.2 616.4 90.6Q613 91.2 611 93.4Z" fill="none" stroke="#4c8cf2" stroke-width="0.8" stroke-linejoin="round"/>
<rect x="-3.7" y="-2.2" width="7.4" height="4.4" rx="2.2" transform="translate(618.9 99.5) rotate(-42)" fill="#fff" stroke="#4c8cf2" stroke-width="1.2"/>
<rect x="-3.7" y="-2.2" width="7.4" height="4.4" rx="2.2" transform="translate(624.3 94.7) rotate(-42)" fill="#fff" stroke="#4c8cf2" stroke-width="1.2"/>
<path d="M620 98.6L623.2 95.7" stroke="#4c8cf2" stroke-width="1.2" stroke-linecap="round"/></svg>
<svg class="lt" style="left:568.58px;top:29.6px" width="24.41" height="19.8" viewBox="585.08 102 24.41 19.8"><text x="587.08" y="115.31" font-size="9.9" fill="#444" text-anchor="start" textLength="20.02" lengthAdjust="spacingAndGlyphs">PDF</text></svg>
<svg class="jt" role="img" aria-label="を作成し" style="left:592.1px;top:32.07px" width="36.4" height="14.25" viewBox="608.6 104.47 36.4 14.25" fill="#444"><text x="610.6" y="115.21" font-size="9.5" fill="#444" text-anchor="start" textLength="32.4" lengthAdjust="spacingAndGlyphs">を作成し</text></svg>
<svg class="jt" role="img" aria-label="てリンクを共有" style="left:569.7px;top:44.07px" width="57.8" height="14.25" viewBox="586.2 116.47 57.8 14.25" fill="#444"><text x="588.2" y="127.21" font-size="9.5" fill="#444" text-anchor="start" textLength="53.8" lengthAdjust="spacingAndGlyphs">てリンクを共有</text></svg>
<svg style="left:632.5px;top:5.6px" width="30" height="26" viewBox="649 78 30 26"><path d="M659 99.3H651Q650.2 99.3 650.5 97.7Q651.4 93.6 656.2 92.1Q657.6 91.6 656.8 90.5Q655.2 88.5 655.2 85.9A4.5 5.2 0 0 1 664.2 85.9Q664.2 88.5 662.6 90.5Q661.8 91.6 663.2 92.1Q664.9 92.7 666.2 93.8" fill="none" stroke="#4c8cf2" stroke-width="1.2" stroke-linecap="round" stroke-linejoin="round"/>
<path d="M662.4 96.7L665.1 99.5M665.1 96.7L662.4 99.5M666.6 99.1L668 96.6L669.3 98.9L670.8 96.4L672.1 98.7L674.5 96.3" fill="none" stroke="#4c8cf2" stroke-width="0.9" stroke-linejoin="round"/>
<path d="M661.6 102.1H675" stroke="#4c8cf2" stroke-width="1.5"/></svg>
<svg class="jt" role="img" aria-label="署名" style="left:634.9px;top:32.07px" width="22.6" height="14.25" viewBox="651.4 104.47 22.6 14.25" fill="#444"><text x="653.4" y="115.21" font-size="9.5" fill="#444" text-anchor="start" textLength="18.6" lengthAdjust="spacingAndGlyphs">署名</text></svg>
<svg class="jt" role="img" aria-label="を依頼" style="left:631.1px;top:44.07px" width="30.4" height="14.25" viewBox="647.6 116.47 30.4 14.25" fill="#444"><text x="649.6" y="127.21" font-size="9.5" fill="#444" text-anchor="start" textLength="26.4" lengthAdjust="spacingAndGlyphs">を依頼</text></svg>
<svg class="lt" style="left:579.98px;top:61.7px" width="90.63" height="21" viewBox="596.48 134.1 90.63 21"><text x="598.48" y="148.21" font-size="10.5" fill="#444" text-anchor="start" textLength="67.59" lengthAdjust="spacingAndGlyphs">Adobe Acrobat</text></svg>
<div style="left:668.5px;top:4.6px;width:1px;height:70.5px;background:#d2d2d2;"></div>
<svg style="left:683.5px;top:4.6px" width="24" height="28" viewBox="700 77 24 28"><rect x="707" y="78.5" width="9.2" height="17.2" rx="4.6" fill="#86bdee" stroke="#2178cf" stroke-width="1.3"/>
<path d="M704.2 90.8Q704.2 98.2 711.6 98.2Q719 98.2 719 90.8M711.6 98.2V102.2" fill="none" stroke="#555" stroke-width="1.25" stroke-linecap="round"/></svg>
<svg class="jt" role="img" aria-label="ディクテー" style="left:675.5px;top:33.67px" width="39" height="14.25" viewBox="692 106.08 39 14.25" fill="#444"><text x="694" y="116.82" font-size="9.5" fill="#444" text-anchor="start" textLength="35" lengthAdjust="spacingAndGlyphs">ディクテー</text></svg>
<svg class="jt" role="img" aria-label="ション" style="left:679.3px;top:45.47px" width="22.8" height="14.25" viewBox="695.8 117.88 22.8 14.25" fill="#444"><text x="697.8" y="128.62" font-size="9.5" fill="#444" text-anchor="start" textLength="18.8" lengthAdjust="spacingAndGlyphs">ション</text></svg>
<svg style="left:703.5px;top:49.6px" width="8" height="6" viewBox="720 122 8 6"><path d="M721.4 123.8L723.3 125.8L725.2 123.8" fill="none" stroke="#444" stroke-width="1.2" stroke-linecap="round" stroke-linejoin="round"/></svg>
<svg class="jt" role="img" aria-label="音声" style="left:684.1px;top:64.78px" width="22.4" height="14.25" viewBox="700.6 137.18 22.4 14.25" fill="#444"><text x="702.6" y="147.92" font-size="9.5" fill="#444" text-anchor="start" textLength="18.4" lengthAdjust="spacingAndGlyphs">音声</text></svg>
<div style="left:720.5px;top:4.6px;width:1px;height:70.5px;background:#d2d2d2;"></div>
<svg style="left:731.5px;top:5.6px" width="26" height="26" viewBox="748 78 26 26"><rect x="750.3" y="80" width="21.6" height="21.6" fill="#fdeee8" stroke="#e2613a" stroke-width="1.2"/><rect x="753.4" y="83" width="6.6" height="6.4" fill="#fff" stroke="#e2613a" stroke-width="1.1"/><rect x="753.4" y="92" width="6.6" height="6.4" fill="#fff" stroke="#e2613a" stroke-width="1.1"/><rect x="762.4" y="83" width="6.6" height="6.4" fill="#fff" stroke="#e2613a" stroke-width="1.1"/><rect x="762.4" y="92" width="6.6" height="6.4" fill="#fff" stroke="#e2613a" stroke-width="1.1"/></svg>
<svg class="jt" role="img" aria-label="アド" style="left:735.9px;top:32.07px" width="18" height="14.25" viewBox="752.4 104.47 18 14.25" fill="#444"><text x="754.4" y="115.21" font-size="9.5" fill="#444" text-anchor="start" textLength="14" lengthAdjust="spacingAndGlyphs">アド</text></svg>
<svg class="jt" role="img" aria-label="イン" style="left:736.5px;top:44.27px" width="17" height="14.25" viewBox="753 116.67 17 14.25" fill="#444"><text x="755" y="127.41" font-size="9.5" fill="#444" text-anchor="start" textLength="13" lengthAdjust="spacingAndGlyphs">イン</text></svg>
<svg class="jt" role="img" aria-label="アドイン" style="left:727.5px;top:64.78px" width="32.6" height="14.25" viewBox="744 137.18 32.6 14.25" fill="#444"><text x="746" y="147.92" font-size="9.5" fill="#444" text-anchor="start" textLength="28.6" lengthAdjust="spacingAndGlyphs">アドイン</text></svg>
<div style="left:766.5px;top:4.6px;width:1px;height:70.5px;background:#d2d2d2;"></div>
<svg style="left:775.5px;top:4.6px" width="30" height="28" viewBox="792 77 30 28">
<path d="M811 86.7H817.1M807 92.5H812.4M803 98.2H808.8" stroke="#1e5cc6" stroke-width="3.5" stroke-linecap="round"/>
<path d="M796.2 98.2L807.8 79.9Q808.9 78.5 810.4 79.4L812.3 80.7Q813.5 81.7 812.6 83.1L800.4 100.6L795 102Z" fill="#fff" stroke="#1e5cc6" stroke-width="1.25" stroke-linejoin="round"/>
<path d="M806.9 80.6L809 78.9L813 81.6L812 83.6Z" fill="#1e5cc6"/>
<path d="M795 102L796 98.4L799.6 100.8Z" fill="#1e5cc6" stroke="#1e5cc6" stroke-width="0.8" stroke-linejoin="round"/>
</svg>
<svg class="jt" role="img" aria-label="エディ" style="left:777.9px;top:31.88px" width="24" height="14.25" viewBox="794.4 104.28 24 14.25" fill="#444"><text x="796.4" y="115.02" font-size="9.5" fill="#444" text-anchor="start" textLength="20" lengthAdjust="spacingAndGlyphs">エディ</text></svg>
<svg class="jt" role="img" aria-label="ター" style="left:780.9px;top:43.88px" width="18.4" height="14.25" viewBox="797.4 116.28 18.4 14.25" fill="#444"><text x="799.4" y="127.02" font-size="9.5" fill="#444" text-anchor="start" textLength="14.4" lengthAdjust="spacingAndGlyphs">ター</text></svg>
<svg style="left:810.5px;top:4.6px" width="32" height="28" viewBox="827 77 32 28">
<path d="M840.6 79.5H847.4Q850.2 79.5 850.9 81.7L851.8 84.6H844Z" fill="#d4d4d4" stroke="#b8b8b8" stroke-width="0.8" stroke-linejoin="round"/>
<path d="M843.6 101.1H837.2Q834.6 101.1 834 98.9L833.2 96H841Z" fill="#d4d4d4" stroke="#b8b8b8" stroke-width="0.8" stroke-linejoin="round"/>
<path d="M835.2 79.5H841.4Q843.6 79.5 843 81.5L839.2 94.4Q838.6 96.3 836.6 96.3H831.6Q828.8 96.3 829.5 93.5L832.2 82Q832.7 79.5 835.2 79.5Z" fill="#f0f0f0" stroke="#b8b8b8" stroke-width="0.9" stroke-linejoin="round"/>
<path d="M847.8 84.2H852.6Q855.4 84.2 854.7 87L852 98.6Q851.5 101.1 849 101.1H842.8Q840.6 101.1 841.2 99.1L845 86.2Q845.6 84.2 847.8 84.2Z" fill="#f0f0f0" stroke="#b8b8b8" stroke-width="0.9" stroke-linejoin="round"/></svg>
<svg class="lt" style="left:808.19px;top:28.7px" width="48.53" height="19.6" viewBox="824.69 101.1 48.53 19.6"><text x="826.69" y="114.27" font-size="9.8" fill="#b2b2b2" text-anchor="start" textLength="31.28" lengthAdjust="spacingAndGlyphs">Copilot</text></svg>
<div style="left:849px;top:4.6px;width:1px;height:70.5px;background:#d2d2d2;"></div>
<svg style="left:974.5px;top:64.6px" width="12" height="9" viewBox="991 137 12 9"><path d="M993.5 139.8L997 143.4L1000.5 139.8" fill="none" stroke="#444" stroke-width="1.1" stroke-linecap="round" stroke-linejoin="round"/></svg>
</div>
<div id="hruler" style="left:0px;top:143px;width:1006px;height:19.7px;background:#e1e1e1;">
<div style="left:279px;top:2.7px;width:453px;height:13.3px;background:#fff;"></div>
<svg style="left:189px;top:0.5px" width="634.4" height="19.2" viewBox="198 152.5 634.4 19.2"><path d="M281.6 159.6V164.2" stroke="#b2b2b2" stroke-width="1"/><path d="M275.73 159.6V164.2" stroke="#b2b2b2" stroke-width="1"/><path d="M269.85 159.6V164.2" stroke="#b2b2b2" stroke-width="1"/><path d="M263.98 159.6V164.2" stroke="#b2b2b2" stroke-width="1"/><path d="M258.1 159.6V164.2" stroke="#b2b2b2" stroke-width="1"/><path d="M252.23 159.6V164.2" stroke="#b2b2b2" stroke-width="1"/><path d="M246.35 159.6V164.2" stroke="#b2b2b2" stroke-width="1"/><path d="M240.48 159.6V164.2" stroke="#b2b2b2" stroke-width="1"/><path d="M234.6 159.6V164.2" stroke="#b2b2b2" stroke-width="1"/><path d="M228.73 159.6V164.2" stroke="#b2b2b2" stroke-width="1"/><path d="M222.85 159.6V164.2" stroke="#b2b2b2" stroke-width="1"/><path d="M216.98 159.6V164.2" stroke="#b2b2b2" stroke-width="1"/><path d="M211.1 159.6V164.2" stroke="#b2b2b2" stroke-width="1"/><path d="M205.23 159.6V164.2" stroke="#b2b2b2" stroke-width="1"/><path d="M199.35 159.6V164.2" stroke="#b2b2b2" stroke-width="1"/><path d="M745.4 159.6V164.2" stroke="#b2b2b2" stroke-width="1"/><path d="M751.27 159.6V164.2" stroke="#b2b2b2" stroke-width="1"/><path d="M757.15 159.6V164.2" stroke="#b2b2b2" stroke-width="1"/><path d="M763.02 159.6V164.2" stroke="#b2b2b2" stroke-width="1"/><path d="M768.9 159.6V164.2" stroke="#b2b2b2" stroke-width="1"/><path d="M774.77 159.6V164.2" stroke="#b2b2b2" stroke-width="1"/><path d="M780.65 159.6V164.2" stroke="#b2b2b2" stroke-width="1"/><path d="M786.52 159.6V164.2" stroke="#b2b2b2" stroke-width="1"/><path d="M792.4 159.6V164.2" stroke="#b2b2b2" stroke-width="1"/><path d="M798.27 159.6V164.2" stroke="#b2b2b2" stroke-width="1"/><path d="M804.15 159.6V164.2" stroke="#b2b2b2" stroke-width="1"/><path d="M810.02 159.6V164.2" stroke="#b2b2b2" stroke-width="1"/><path d="M815.9 159.6V164.2" stroke="#b2b2b2" stroke-width="1"/><path d="M821.77 159.6V164.2" stroke="#b2b2b2" stroke-width="1"/><path d="M827.65 159.6V164.2" stroke="#b2b2b2" stroke-width="1"/><path d="M293.3 159.8V164" stroke="#8e8e8e" stroke-width="0.8"/><path d="M305.05 159.8V164" stroke="#8e8e8e" stroke-width="0.8"/><path d="M316.8 159.8V164" stroke="#8e8e8e" stroke-width="0.8"/><path d="M328.55 159.8V164" stroke="#8e8e8e" stroke-width="0.8"/><path d="M340.3 159.8V164" stroke="#8e8e8e" stroke-width="0.8"/><path d="M352.05 159.8V164" stroke="#8e8e8e" stroke-width="0.8"/><path d="M363.8 159.8V164" stroke="#8e8e8e" stroke-width="0.8"/><path d="M375.55 159.8V164" stroke="#8e8e8e" stroke-width="0.8"/><path d="M387.3 159.8V164" stroke="#8e8e8e" stroke-width="0.8"/><path d="M399.05 159.8V164" stroke="#8e8e8e" stroke-width="0.8"/><path d="M410.8 159.8V164" stroke="#8e8e8e" stroke-width="0.8"/><path d="M422.55 159.8V164" stroke="#8e8e8e" stroke-width="0.8"/><path d="M434.3 159.8V164" stroke="#8e8e8e" stroke-width="0.8"/><path d="M446.05 159.8V164" stroke="#8e8e8e" stroke-width="0.8"/><path d="M457.8 159.8V164" stroke="#8e8e8e" stroke-width="0.8"/><path d="M469.55 159.8V164" stroke="#8e8e8e" stroke-width="0.8"/><path d="M481.3 159.8V164" stroke="#8e8e8e" stroke-width="0.8"/><path d="M493.05 159.8V164" stroke="#8e8e8e" stroke-width="0.8"/><path d="M504.8 159.8V164" stroke="#8e8e8e" stroke-width="0.8"/><path d="M516.55 159.8V164" stroke="#8e8e8e" stroke-width="0.8"/><path d="M528.3 159.8V164" stroke="#8e8e8e" stroke-width="0.8"/><path d="M540.05 159.8V164" stroke="#8e8e8e" stroke-width="0.8"/><path d="M551.8 159.8V164" stroke="#8e8e8e" stroke-width="0.8"/><path d="M563.55 159.8V164" stroke="#8e8e8e" stroke-width="0.8"/><path d="M575.3 159.8V164" stroke="#8e8e8e" stroke-width="0.8"/><path d="M587.05 159.8V164" stroke="#8e8e8e" stroke-width="0.8"/><path d="M598.8 159.8V164" stroke="#8e8e8e" stroke-width="0.8"/><path d="M610.55 159.8V164" stroke="#8e8e8e" stroke-width="0.8"/><path d="M622.3 159.8V164" stroke="#8e8e8e" stroke-width="0.8"/><path d="M634.05 159.8V164" stroke="#8e8e8e" stroke-width="0.8"/><path d="M645.8 159.8V164" stroke="#8e8e8e" stroke-width="0.8"/><path d="M657.55 159.8V164" stroke="#8e8e8e" stroke-width="0.8"/><path d="M669.3 159.8V164" stroke="#8e8e8e" stroke-width="0.8"/><path d="M681.05 159.8V164" stroke="#8e8e8e" stroke-width="0.8"/><path d="M692.8 159.8V164" stroke="#8e8e8e" stroke-width="0.8"/><path d="M704.55 159.8V164" stroke="#8e8e8e" stroke-width="0.8"/><path d="M716.3 159.8V164" stroke="#8e8e8e" stroke-width="0.8"/><path d="M728.05 159.8V164" stroke="#8e8e8e" stroke-width="0.8"/><path d="M739.8 159.8V164" stroke="#8e8e8e" stroke-width="0.8"/><path d="M284.4 153.5H291.6V155.8L288 158.4L284.4 155.8Z" fill="#fff" stroke="#a0a0a0" stroke-width="0.7"/><path d="M284.4 171.3V166.4L288 163.8L291.6 166.4V171.3ZM284.4 168.3H291.6" fill="#fff" stroke="#a0a0a0" stroke-width="0.7"/><path d="M737.6 169.6V166.4L741.4 163.7L745.2 166.4V169.6Z" fill="#fff" stroke="#a0a0a0" stroke-width="0.7"/></svg>
<svg class="lt" style="left:284.72px;top:3.6px" width="10.15" height="13.4" viewBox="293.72 155.6 10.15 13.4"><text x="298.8" y="164.6" font-size="6.7" fill="#5c5c5c" text-anchor="middle">1</text></svg>
<svg class="lt" style="left:296.47px;top:3.6px" width="10.15" height="13.4" viewBox="305.47 155.6 10.15 13.4"><text x="310.55" y="164.6" font-size="6.7" fill="#5c5c5c" text-anchor="middle">2</text></svg>
<svg class="lt" style="left:308.22px;top:3.6px" width="10.15" height="13.4" viewBox="317.22 155.6 10.15 13.4"><text x="322.3" y="164.6" font-size="6.7" fill="#5c5c5c" text-anchor="middle">3</text></svg>
<svg class="lt" style="left:319.97px;top:3.6px" width="10.15" height="13.4" viewBox="328.97 155.6 10.15 13.4"><text x="334.05" y="164.6" font-size="6.7" fill="#5c5c5c" text-anchor="middle">4</text></svg>
<svg class="lt" style="left:331.72px;top:3.6px" width="10.15" height="13.4" viewBox="340.72 155.6 10.15 13.4"><text x="345.8" y="164.6" font-size="6.7" fill="#5c5c5c" text-anchor="middle">5</text></svg>
<svg class="lt" style="left:343.47px;top:3.6px" width="10.15" height="13.4" viewBox="352.47 155.6 10.15 13.4"><text x="357.55" y="164.6" font-size="6.7" fill="#5c5c5c" text-anchor="middle">6</text></svg>
<svg class="lt" style="left:355.22px;top:3.6px" width="10.15" height="13.4" viewBox="364.22 155.6 10.15 13.4"><text x="369.3" y="164.6" font-size="6.7" fill="#5c5c5c" text-anchor="middle">7</text></svg>
<svg class="lt" style="left:366.97px;top:3.6px" width="10.15" height="13.4" viewBox="375.97 155.6 10.15 13.4"><text x="381.05" y="164.6" font-size="6.7" fill="#5c5c5c" text-anchor="middle">8</text></svg>
<svg class="lt" style="left:378.72px;top:3.6px" width="10.15" height="13.4" viewBox="387.72 155.6 10.15 13.4"><text x="392.8" y="164.6" font-size="6.7" fill="#5c5c5c" text-anchor="middle">9</text></svg>
<svg class="lt" style="left:388.4px;top:3.6px" width="14.31" height="13.4" viewBox="397.4 155.6 14.31 13.4"><text x="404.55" y="164.6" font-size="6.7" fill="#5c5c5c" text-anchor="middle" style="letter-spacing:-0.6px;">10</text></svg>
<svg class="lt" style="left:400.15px;top:3.6px" width="14.31" height="13.4" viewBox="409.15 155.6 14.31 13.4"><text x="416.3" y="164.6" font-size="6.7" fill="#5c5c5c" text-anchor="middle" style="letter-spacing:-0.6px;">11</text></svg>
<svg class="lt" style="left:411.9px;top:3.6px" width="14.31" height="13.4" viewBox="420.9 155.6 14.31 13.4"><text x="428.05" y="164.6" font-size="6.7" fill="#5c5c5c" text-anchor="middle" style="letter-spacing:-0.6px;">12</text></svg>
<svg class="lt" style="left:423.65px;top:3.6px" width="14.31" height="13.4" viewBox="432.65 155.6 14.31 13.4"><text x="439.8" y="164.6" font-size="6.7" fill="#5c5c5c" text-anchor="middle" style="letter-spacing:-0.6px;">13</text></svg>
<svg class="lt" style="left:435.4px;top:3.6px" width="14.31" height="13.4" viewBox="444.4 155.6 14.31 13.4"><text x="451.55" y="164.6" font-size="6.7" fill="#5c5c5c" text-anchor="middle" style="letter-spacing:-0.6px;">14</text></svg>
<svg class="lt" style="left:447.15px;top:3.6px" width="14.31" height="13.4" viewBox="456.15 155.6 14.31 13.4"><text x="463.3" y="164.6" font-size="6.7" fill="#5c5c5c" text-anchor="middle" style="letter-spacing:-0.6px;">15</text></svg>
<svg class="lt" style="left:458.9px;top:3.6px" width="14.31" height="13.4" viewBox="467.9 155.6 14.31 13.4"><text x="475.05" y="164.6" font-size="6.7" fill="#5c5c5c" text-anchor="middle" style="letter-spacing:-0.6px;">16</text></svg>
<svg class="lt" style="left:470.65px;top:3.6px" width="14.31" height="13.4" viewBox="479.65 155.6 14.31 13.4"><text x="486.8" y="164.6" font-size="6.7" fill="#5c5c5c" text-anchor="middle" style="letter-spacing:-0.6px;">17</text></svg>
<svg class="lt" style="left:482.4px;top:3.6px" width="14.31" height="13.4" viewBox="491.4 155.6 14.31 13.4"><text x="498.55" y="164.6" font-size="6.7" fill="#5c5c5c" text-anchor="middle" style="letter-spacing:-0.6px;">18</text></svg>
<svg class="lt" style="left:494.15px;top:3.6px" width="14.31" height="13.4" viewBox="503.15 155.6 14.31 13.4"><text x="510.3" y="164.6" font-size="6.7" fill="#5c5c5c" text-anchor="middle" style="letter-spacing:-0.6px;">19</text></svg>
<svg class="lt" style="left:505.9px;top:3.6px" width="14.31" height="13.4" viewBox="514.9 155.6 14.31 13.4"><text x="522.05" y="164.6" font-size="6.7" fill="#5c5c5c" text-anchor="middle" style="letter-spacing:-0.6px;">20</text></svg>
<svg class="lt" style="left:517.65px;top:3.6px" width="14.31" height="13.4" viewBox="526.65 155.6 14.31 13.4"><text x="533.8" y="164.6" font-size="6.7" fill="#5c5c5c" text-anchor="middle" style="letter-spacing:-0.6px;">21</text></svg>
<svg class="lt" style="left:529.4px;top:3.6px" width="14.31" height="13.4" viewBox="538.4 155.6 14.31 13.4"><text x="545.55" y="164.6" font-size="6.7" fill="#5c5c5c" text-anchor="middle" style="letter-spacing:-0.6px;">22</text></svg>
<svg class="lt" style="left:541.15px;top:3.6px" width="14.31" height="13.4" viewBox="550.15 155.6 14.31 13.4"><text x="557.3" y="164.6" font-size="6.7" fill="#5c5c5c" text-anchor="middle" style="letter-spacing:-0.6px;">23</text></svg>
<svg class="lt" style="left:552.9px;top:3.6px" width="14.31" height="13.4" viewBox="561.9 155.6 14.31 13.4"><text x="569.05" y="164.6" font-size="6.7" fill="#5c5c5c" text-anchor="middle" style="letter-spacing:-0.6px;">24</text></svg>
<svg class="lt" style="left:564.65px;top:3.6px" width="14.31" height="13.4" viewBox="573.65 155.6 14.31 13.4"><text x="580.8" y="164.6" font-size="6.7" fill="#5c5c5c" text-anchor="middle" style="letter-spacing:-0.6px;">25</text></svg>
<svg class="lt" style="left:576.4px;top:3.6px" width="14.31" height="13.4" viewBox="585.4 155.6 14.31 13.4"><text x="592.55" y="164.6" font-size="6.7" fill="#5c5c5c" text-anchor="middle" style="letter-spacing:-0.6px;">26</text></svg>
<svg class="lt" style="left:588.15px;top:3.6px" width="14.31" height="13.4" viewBox="597.15 155.6 14.31 13.4"><text x="604.3" y="164.6" font-size="6.7" fill="#5c5c5c" text-anchor="middle" style="letter-spacing:-0.6px;">27</text></svg>
<svg class="lt" style="left:599.9px;top:3.6px" width="14.31" height="13.4" viewBox="608.9 155.6 14.31 13.4"><text x="616.05" y="164.6" font-size="6.7" fill="#5c5c5c" text-anchor="middle" style="letter-spacing:-0.6px;">28</text></svg>
<svg class="lt" style="left:611.65px;top:3.6px" width="14.31" height="13.4" viewBox="620.65 155.6 14.31 13.4"><text x="627.8" y="164.6" font-size="6.7" fill="#5c5c5c" text-anchor="middle" style="letter-spacing:-0.6px;">29</text></svg>
<svg class="lt" style="left:623.4px;top:3.6px" width="14.31" height="13.4" viewBox="632.4 155.6 14.31 13.4"><text x="639.55" y="164.6" font-size="6.7" fill="#5c5c5c" text-anchor="middle" style="letter-spacing:-0.6px;">30</text></svg>
<svg class="lt" style="left:635.15px;top:3.6px" width="14.31" height="13.4" viewBox="644.15 155.6 14.31 13.4"><text x="651.3" y="164.6" font-size="6.7" fill="#5c5c5c" text-anchor="middle" style="letter-spacing:-0.6px;">31</text></svg>
<svg class="lt" style="left:646.9px;top:3.6px" width="14.31" height="13.4" viewBox="655.9 155.6 14.31 13.4"><text x="663.05" y="164.6" font-size="6.7" fill="#5c5c5c" text-anchor="middle" style="letter-spacing:-0.6px;">32</text></svg>
<svg class="lt" style="left:658.65px;top:3.6px" width="14.31" height="13.4" viewBox="667.65 155.6 14.31 13.4"><text x="674.8" y="164.6" font-size="6.7" fill="#5c5c5c" text-anchor="middle" style="letter-spacing:-0.6px;">33</text></svg>
<svg class="lt" style="left:670.4px;top:3.6px" width="14.31" height="13.4" viewBox="679.4 155.6 14.31 13.4"><text x="686.55" y="164.6" font-size="6.7" fill="#5c5c5c" text-anchor="middle" style="letter-spacing:-0.6px;">34</text></svg>
<svg class="lt" style="left:682.15px;top:3.6px" width="14.31" height="13.4" viewBox="691.15 155.6 14.31 13.4"><text x="698.3" y="164.6" font-size="6.7" fill="#5c5c5c" text-anchor="middle" style="letter-spacing:-0.6px;">35</text></svg>
<svg class="lt" style="left:693.9px;top:3.6px" width="14.31" height="13.4" viewBox="702.9 155.6 14.31 13.4"><text x="710.05" y="164.6" font-size="6.7" fill="#5c5c5c" text-anchor="middle" style="letter-spacing:-0.6px;">36</text></svg>
<svg class="lt" style="left:705.65px;top:3.6px" width="14.31" height="13.4" viewBox="714.65 155.6 14.31 13.4"><text x="721.8" y="164.6" font-size="6.7" fill="#5c5c5c" text-anchor="middle" style="letter-spacing:-0.6px;">37</text></svg>
<svg class="lt" style="left:717.4px;top:3.6px" width="14.31" height="13.4" viewBox="726.4 155.6 14.31 13.4"><text x="733.55" y="164.6" font-size="6.7" fill="#5c5c5c" text-anchor="middle" style="letter-spacing:-0.6px;">38</text></svg>
</div>
<div style="left:20px;top:143.5px;width:1px;height:396px;background:#dedede;"></div>
<svg style="left:7px;top:150px" width="6" height="7" viewBox="16 159 6 7"><path d="M17.6 160.4V164.6H21" fill="none" stroke="#444" stroke-width="1.3"/></svg>
<div id="vruler" style="left:3px;top:162.6px;width:14.4px;height:377px;background:#e3e3e3;">
<div style="left:0px;top:40.4px;width:14.4px;height:336.6px;background:#fff;"></div>
<svg style="left:0px;top:0px" width="14.4" height="377" viewBox="12 171.6 14.4 377"><path d="M17 173.2H22" stroke="#a8a8a8" stroke-width="0.9"/><path d="M17 182.8H22" stroke="#a8a8a8" stroke-width="0.9"/><path d="M17 192.4H22" stroke="#a8a8a8" stroke-width="0.9"/><path d="M17 202H22" stroke="#a8a8a8" stroke-width="0.9"/><path d="M17.2 221.2H21.8" stroke="#a0a0a0" stroke-width="0.8"/><path d="M17.2 240.35H21.8" stroke="#a0a0a0" stroke-width="0.8"/><path d="M17.2 259.5H21.8" stroke="#a0a0a0" stroke-width="0.8"/><path d="M17.2 278.65H21.8" stroke="#a0a0a0" stroke-width="0.8"/><path d="M17.2 297.8H21.8" stroke="#a0a0a0" stroke-width="0.8"/><path d="M17.2 316.95H21.8" stroke="#a0a0a0" stroke-width="0.8"/><path d="M17.2 336.1H21.8" stroke="#a0a0a0" stroke-width="0.8"/><path d="M17.2 355.25H21.8" stroke="#a0a0a0" stroke-width="0.8"/><path d="M17.2 374.4H21.8" stroke="#a0a0a0" stroke-width="0.8"/><path d="M17.2 393.55H21.8" stroke="#a0a0a0" stroke-width="0.8"/><path d="M17.2 412.7H21.8" stroke="#a0a0a0" stroke-width="0.8"/><path d="M17.2 431.85H21.8" stroke="#a0a0a0" stroke-width="0.8"/><path d="M17.2 451H21.8" stroke="#a0a0a0" stroke-width="0.8"/><path d="M17.2 470.15H21.8" stroke="#a0a0a0" stroke-width="0.8"/><path d="M17.2 489.3H21.8" stroke="#a0a0a0" stroke-width="0.8"/><path d="M17.2 508.45H21.8" stroke="#a0a0a0" stroke-width="0.8"/><path d="M17.2 527.6H21.8" stroke="#a0a0a0" stroke-width="0.8"/></svg>
<svg class="lt" style="left:0px;top:51.2px" width="14.4" height="16" viewBox="12 222.8 14.4 16"><text transform="translate(22.4 230.8) rotate(-90)" text-anchor="middle" font-size="6.4" fill="#5a5a5a">1</text></svg>
<svg class="lt" style="left:0px;top:70.35px" width="14.4" height="16" viewBox="12 241.95 14.4 16"><text transform="translate(22.4 249.95) rotate(-90)" text-anchor="middle" font-size="6.4" fill="#5a5a5a">2</text></svg>
<svg class="lt" style="left:0px;top:89.5px" width="14.4" height="16" viewBox="12 261.1 14.4 16"><text transform="translate(22.4 269.1) rotate(-90)" text-anchor="middle" font-size="6.4" fill="#5a5a5a">3</text></svg>
<svg class="lt" style="left:0px;top:108.65px" width="14.4" height="16" viewBox="12 280.25 14.4 16"><text transform="translate(22.4 288.25) rotate(-90)" text-anchor="middle" font-size="6.4" fill="#5a5a5a">4</text></svg>
<svg class="lt" style="left:0px;top:127.8px" width="14.4" height="16" viewBox="12 299.4 14.4 16"><text transform="translate(22.4 307.4) rotate(-90)" text-anchor="middle" font-size="6.4" fill="#5a5a5a">5</text></svg>
<svg class="lt" style="left:0px;top:146.95px" width="14.4" height="16" viewBox="12 318.55 14.4 16"><text transform="translate(22.4 326.55) rotate(-90)" text-anchor="middle" font-size="6.4" fill="#5a5a5a">6</text></svg>
<svg class="lt" style="left:0px;top:166.1px" width="14.4" height="16" viewBox="12 337.7 14.4 16"><text transform="translate(22.4 345.7) rotate(-90)" text-anchor="middle" font-size="6.4" fill="#5a5a5a">7</text></svg>
<svg class="lt" style="left:0px;top:185.25px" width="14.4" height="16" viewBox="12 356.85 14.4 16"><text transform="translate(22.4 364.85) rotate(-90)" text-anchor="middle" font-size="6.4" fill="#5a5a5a">8</text></svg>
<svg class="lt" style="left:0px;top:204.4px" width="14.4" height="16" viewBox="12 376 14.4 16"><text transform="translate(22.4 384) rotate(-90)" text-anchor="middle" font-size="6.4" fill="#5a5a5a">9</text></svg>
<svg class="lt" style="left:0px;top:223.55px" width="14.4" height="16" viewBox="12 395.15 14.4 16"><text transform="translate(22.4 403.15) rotate(-90)" text-anchor="middle" font-size="6.4" fill="#5a5a5a" letter-spacing="-0.4">10</text></svg>
<svg class="lt" style="left:0px;top:242.7px" width="14.4" height="16" viewBox="12 414.3 14.4 16"><text transform="translate(22.4 422.3) rotate(-90)" text-anchor="middle" font-size="6.4" fill="#5a5a5a" letter-spacing="-0.4">11</text></svg>
<svg class="lt" style="left:0px;top:261.85px" width="14.4" height="16" viewBox="12 433.45 14.4 16"><text transform="translate(22.4 441.45) rotate(-90)" text-anchor="middle" font-size="6.4" fill="#5a5a5a" letter-spacing="-0.4">12</text></svg>
<svg class="lt" style="left:0px;top:281px" width="14.4" height="16" viewBox="12 452.6 14.4 16"><text transform="translate(22.4 460.6) rotate(-90)" text-anchor="middle" font-size="6.4" fill="#5a5a5a" letter-spacing="-0.4">13</text></svg>
<svg class="lt" style="left:0px;top:300.15px" width="14.4" height="16" viewBox="12 471.75 14.4 16"><text transform="translate(22.4 479.75) rotate(-90)" text-anchor="middle" font-size="6.4" fill="#5a5a5a" letter-spacing="-0.4">14</text></svg>
<svg class="lt" style="left:0px;top:319.3px" width="14.4" height="16" viewBox="12 490.9 14.4 16"><text transform="translate(22.4 498.9) rotate(-90)" text-anchor="middle" font-size="6.4" fill="#5a5a5a" letter-spacing="-0.4">15</text></svg>
<svg class="lt" style="left:0px;top:338.45px" width="14.4" height="16" viewBox="12 510.05 14.4 16"><text transform="translate(22.4 518.05) rotate(-90)" text-anchor="middle" font-size="6.4" fill="#5a5a5a" letter-spacing="-0.4">16</text></svg>
<svg class="lt" style="left:0px;top:357.6px" width="14.4" height="16" viewBox="12 529.2 14.4 16"><text transform="translate(22.4 537.2) rotate(-90)" text-anchor="middle" font-size="6.4" fill="#5a5a5a" letter-spacing="-0.4">17</text></svg>
</div>
<div id="docpage" style="left:189px;top:162.7px;width:634.3px;height:376.9px;background:#fff;">
<svg style="left:68px;top:18.3px" width="500" height="24" viewBox="266 190 500 24"><path d="M287.5 192.4V211.1H269M742 192.4V211.1H760.6" fill="none" stroke="#c6c6c6" stroke-width="0.9"/></svg>
<svg class="jt" role="img" aria-label="テスト" style="left:89.1px;top:152.2px" width="36.3" height="16.8" viewBox="287.1 323.9 36.3 16.8" fill="#3a3a3a"><text x="289.1" y="336.56" font-size="11.2" fill="#3a3a3a" text-anchor="start" textLength="32.3" lengthAdjust="spacingAndGlyphs" style="font-family:'Liberation Serif','Noto Serif CJK SC',serif;">テスト</text></svg>
<div class="shape" style="left:124.6px;top:43.9px;width:217.6px;height:119.4px;background:#156082;border:1px solid #1b4258;"></div>
<div id="picture" style="left:307.8px;top:50.5px;width:217.6px;height:144.5px;background:radial-gradient(ellipse 45% 75% at 100% 0%,rgba(255,247,242,0.55) 0%,rgba(255,247,242,0) 100%),linear-gradient(180deg,#e3c0aa 0%,#dfbaa3 55%,#d3a992 100%);overflow:hidden;">
<svg style="left:0px;top:0px" width="217.6" height="144" viewBox="505.8 222.2 217.6 144">
<defs><linearGradient id="wd" x1="0" x2="1"><stop offset="0" stop-color="#b58848"/><stop offset="0.5" stop-color="#e9c585"/><stop offset="1" stop-color="#cda463"/></linearGradient></defs>
<rect x="533" y="258.6" width="1.4" height="85.4" fill="#8a5a3a" opacity="0.35"/><rect x="554.6" y="259.6" width="1.2" height="83.6" fill="#8a5a3a" opacity="0.3"/>
<rect x="534.2" y="257.8" width="4.8" height="85.8" rx="1.6" fill="url(#wd)"/>
<rect x="538.8" y="259" width="5" height="11.2" rx="0.8" fill="#262626"/>
<path d="M540.2 259.4V270M541.6 259.4V270M542.8 259.4V270" stroke="#555" stroke-width="0.4"/>
<rect x="555.4" y="259.2" width="4.4" height="84.2" rx="1.6" fill="url(#wd)"/>
<rect x="558.2" y="260.3" width="5.4" height="12.6" rx="1" fill="#f2c21a"/>
<path d="M560 260.8V272.4M561.8 260.8V272.4" stroke="#d9a90c" stroke-width="0.5"/>
</svg>
</div>
<div class="shape" style="left:320px;top:209.3px;width:216.2px;height:119.4px;background:#156082;border:1px solid #0e3f58;"></div>
<svg class="sel" style="left:117px;top:4.3px" width="232" height="166" viewBox="315 176 232 166"><rect x="323" y="216" width="216.6" height="118.6" fill="none" stroke="#555" stroke-width="0.9"/>
<path d="M431.2 196.6V216" stroke="#5a5a5a" stroke-width="0.9"/><circle cx="323" cy="216" r="3.55" fill="#fff" stroke="#5a5a5a" stroke-width="1.35"/><circle cx="431.4" cy="216" r="3.55" fill="#fff" stroke="#5a5a5a" stroke-width="1.35"/><circle cx="539.6" cy="216" r="3.55" fill="#fff" stroke="#5a5a5a" stroke-width="1.35"/><circle cx="323" cy="275.4" r="3.55" fill="#fff" stroke="#5a5a5a" stroke-width="1.35"/><circle cx="539.6" cy="275.4" r="3.55" fill="#fff" stroke="#5a5a5a" stroke-width="1.35"/><circle cx="323" cy="334.6" r="3.55" fill="#fff" stroke="#5a5a5a" stroke-width="1.35"/><circle cx="431.4" cy="334.6" r="3.55" fill="#fff" stroke="#5a5a5a" stroke-width="1.35"/><circle cx="539.6" cy="334.6" r="3.55" fill="#fff" stroke="#5a5a5a" stroke-width="1.35"/>
<path d="M436.15 194.1A7.7 7.7 0 1 1 438.9 187.8L442.5 187.8L437.5 193.5L433.3 187.8L434.9 187.8A3.7 3.7 0 1 0 433.58 191.03Z" fill="#fff" stroke="#5a5a5a" stroke-width="1.4" stroke-linejoin="round"/>
</svg>
<div style="left:350.6px;top:44.5px;width:22.4px;height:22.2px;background:#a9a9a9;border:1px solid #4f8add;"></div>
<svg style="left:350.6px;top:44.5px" width="22.4" height="22.2" viewBox="548.6 216.2 22.4 22.2"><path d="M551.6 220.8H568M551.6 233.4H568" stroke="#2374bd" stroke-width="1"/>
<path d="M551.6 224H554.6M565 224H568M551.6 227.1H554M565.6 227.1H568M551.6 230.2H554M565.6 230.2H568" stroke="#2374bd" stroke-width="0.9"/>
<path d="M554.6 230.4V229A5.2 5.2 0 0 1 565 229V230.4H562.2V229A2.4 2.4 0 0 0 557.4 229V230.4Z" fill="#4a4a4a"/></svg>
</div>
<div id="layout-options" style="left:567px;top:209px;width:139px;height:275.6px;background:#fff;border:1px solid #8f8f8f;box-shadow:1px 1px 2px rgba(0,0,0,0.12);">
<svg style="left:-7px;top:1px" width="9" height="12" viewBox="570 220 9 12"><path d="M577.6 221.4L572.6 225.6L577.6 230" fill="#fff" stroke="#8f8f8f" stroke-width="0.9"/><path d="M577.9 221.6V229.8" stroke="#fff" stroke-width="1.4"/></svg>
<svg class="jt" role="img" aria-label="レイアウト オプション" style="left:5.4px;top:6.65px" width="100.2" height="17.7" viewBox="582.4 225.65 100.2 17.7" fill="#1d5cc0"><text x="584.4" y="238.98" font-size="11.8" fill="#1d5cc0" text-anchor="start" textLength="96.2" lengthAdjust="spacingAndGlyphs" style="font-weight:bold;">レイアウト オプション</text></svg>
<svg style="left:116px;top:9px" width="12" height="12" viewBox="693 228 12 12"><path d="M695.2 230.4L703 238.2M703 230.4L695.2 238.2" stroke="#333" stroke-width="1.25"/></svg>
<svg class="jt" role="img" aria-label="行内" style="left:12px;top:39.6px" width="22.4" height="14.4" viewBox="589 258.6 22.4 14.4" fill="#2b2b2b"><text x="591" y="269.45" font-size="9.6" fill="#2b2b2b" text-anchor="start" textLength="18.4" lengthAdjust="spacingAndGlyphs" style="font-weight:bold;">行内</text></svg>
<div style="left:7.2px;top:55.2px;width:34.8px;height:35.2px;background:#e6e6e6;border:1px solid #8c8c8c;"></div>
<svg style="left:9px;top:59px" width="32" height="28" viewBox="586 278 32 28"><path d="M589.6 282.8H614.4M589.6 300.9H614.4" stroke="#3a9ad9" stroke-width="1"/><path d="M605.6 296.2H614.4" stroke="#3a9ad9" stroke-width="1"/>
<path d="M589.4 297V294.6A7.3 7.3 0 0 1 604 294.6V297H600.6V294.6A3.9 3.9 0 0 0 592.8 294.6V297Z" fill="#3b3b3b"/></svg>
<svg class="jt" role="img" aria-label="文字列の折り返し" style="left:12px;top:92.7px" width="73.6" height="14.4" viewBox="589 311.7 73.6 14.4" fill="#2b2b2b"><text x="591" y="322.55" font-size="9.6" fill="#2b2b2b" text-anchor="start" textLength="69.6" lengthAdjust="spacingAndGlyphs" style="font-weight:bold;">文字列の折り返し</text></svg>
<svg style="left:11px;top:114px" width="100" height="60" viewBox="588 333 100 60"><path d="M589.3 335.3H614.3" stroke="#3795da" stroke-width="1.3"/><path d="M589.3 353.6H614.3" stroke="#3795da" stroke-width="1.3"/><path d="M589.3 339.9H593.5" stroke="#3795da" stroke-width="1.3"/><path d="M610.1 339.9H614.3" stroke="#3795da" stroke-width="1.3"/><path d="M589.3 344.5H593.5" stroke="#3795da" stroke-width="1.3"/><path d="M610.1 344.5H614.3" stroke="#3795da" stroke-width="1.3"/><path d="M589.3 349H593.5" stroke="#3795da" stroke-width="1.3"/><path d="M610.1 349H614.3" stroke="#3795da" stroke-width="1.3"/><path d="M594.4 349.3V347.4A7.5 7.5 0 0 1 609.4 347.4V349.3H605.4V347.4A3.5 3.5 0 0 0 598.4 347.4V349.3Z" fill="#3b3b3b"/><path d="M624.4 335.3H649.4" stroke="#3795da" stroke-width="1.3"/><path d="M624.4 353.6H649.4" stroke="#3795da" stroke-width="1.3"/><path d="M624.4 339.9H632" stroke="#3795da" stroke-width="1.3"/><path d="M641.6 339.9H649.4" stroke="#3795da" stroke-width="1.3"/><path d="M624.4 344.5H628.5" stroke="#3795da" stroke-width="1.3"/><path d="M645.3 344.5H649.4" stroke="#3795da" stroke-width="1.3"/><path d="M624.4 349H628.5" stroke="#3795da" stroke-width="1.3"/><path d="M645.3 349H649.4" stroke="#3795da" stroke-width="1.3"/><path d="M629.5 349.3V347.4A7.5 7.5 0 0 1 644.5 347.4V349.3H640.5V347.4A3.5 3.5 0 0 0 633.5 347.4V349.3Z" fill="#3b3b3b"/><path d="M659.6 335.3H684.6" stroke="#3795da" stroke-width="1.3"/><path d="M659.6 353.6H684.6" stroke="#3795da" stroke-width="1.3"/><path d="M659.6 339.9H667.2" stroke="#3795da" stroke-width="1.3"/><path d="M676.8 339.9H684.6" stroke="#3795da" stroke-width="1.3"/><path d="M659.6 344.5H663.7" stroke="#3795da" stroke-width="1.3"/><path d="M680.5 344.5H684.6" stroke="#3795da" stroke-width="1.3"/><path d="M659.6 349H663.7" stroke="#3795da" stroke-width="1.3"/><path d="M680.5 349H684.6" stroke="#3795da" stroke-width="1.3"/><path d="M670.1 349H674.3" stroke="#3795da" stroke-width="1.3"/><path d="M664.7 349.3V347.4A7.5 7.5 0 0 1 679.7 347.4V349.3H675.7V347.4A3.5 3.5 0 0 0 668.7 347.4V349.3Z" fill="#3b3b3b"/><path d="M589.3 370.6H614.3" stroke="#3795da" stroke-width="1.3"/><path d="M589.3 388.9H614.3" stroke="#3795da" stroke-width="1.3"/><path d="M594.4 384.3V382.4A7.5 7.5 0 0 1 609.4 382.4V384.3H605.4V382.4A3.5 3.5 0 0 0 598.4 382.4V384.3Z" fill="#3b3b3b"/><path d="M629.5 384.3V382.4A7.5 7.5 0 0 1 644.5 382.4V384.3H640.5V382.4A3.5 3.5 0 0 0 633.5 382.4V384.3Z" fill="#c9c9c9"/><path d="M624.4 370.6H649.4" stroke="#3795da" stroke-width="1.3"/><path d="M624.4 375.2H649.4" stroke="#3795da" stroke-width="1.3"/><path d="M624.4 379.8H649.4" stroke="#3795da" stroke-width="1.3"/><path d="M624.4 384.3H649.4" stroke="#3795da" stroke-width="1.3"/><path d="M624.4 388.9H649.4" stroke="#3795da" stroke-width="1.3"/><path d="M659.6 370.6H684.6" stroke="#3795da" stroke-width="1.3"/><path d="M659.6 375.2H684.6" stroke="#3795da" stroke-width="1.3"/><path d="M659.6 379.8H684.6" stroke="#3795da" stroke-width="1.3"/><path d="M659.6 384.3H684.6" stroke="#3795da" stroke-width="1.3"/><path d="M659.6 388.9H684.6" stroke="#3795da" stroke-width="1.3"/><path d="M664.7 384.3V382.4A7.5 7.5 0 0 1 679.7 382.4V384.3H675.7V382.4A3.5 3.5 0 0 0 668.7 382.4V384.3Z" fill="#3b3b3b"/></svg>
<svg style="left:11px;top:186px" width="12" height="12" viewBox="588 405 12 12"><circle cx="593.7" cy="411" r="4.4" fill="#ededed" stroke="#d2d2d2" stroke-width="0.9"/></svg>
<svg style="left:119px;top:185.6px" width="12" height="12" viewBox="696 404.6 12 12"><circle cx="702.1" cy="410.6" r="4.5" fill="none" stroke="#a2a2a2" stroke-width="1.1"/><path d="M702.1 410V413.1" stroke="#a2a2a2" stroke-width="1.25"/><circle cx="702.1" cy="408.4" r="0.75" fill="#a2a2a2"/></svg>
<svg style="left:11px;top:214.8px" width="12" height="12" viewBox="588 433.8 12 12"><circle cx="593.7" cy="439.8" r="4.4" fill="#ededed" stroke="#d2d2d2" stroke-width="0.9"/></svg>
<svg style="left:119px;top:214.4px" width="12" height="12" viewBox="696 433.4 12 12"><circle cx="702.1" cy="439.4" r="4.5" fill="none" stroke="#a2a2a2" stroke-width="1.1"/><path d="M702.1 438.8V441.9" stroke="#a2a2a2" stroke-width="1.25"/><circle cx="702.1" cy="437.2" r="0.75" fill="#a2a2a2"/></svg>
<svg class="jt" role="img" aria-label="文字列と一緒に移動す" style="left:24.8px;top:186.1px" width="91.8" height="14.4" viewBox="601.8 405.1 91.8 14.4" fill="#bdbdbd"><text x="603.8" y="415.95" font-size="9.6" fill="#bdbdbd" text-anchor="start" textLength="87.8" lengthAdjust="spacingAndGlyphs">文字列と一緒に移動す</text></svg>
<svg class="jt" role="img" aria-label="る(M)" style="left:24.8px;top:198.4px" width="25.6" height="14.4" viewBox="601.8 417.4 25.6 14.4" fill="#bdbdbd"><text x="603.8" y="428.25" font-size="9.6" fill="#bdbdbd" text-anchor="start" textLength="21.6" lengthAdjust="spacingAndGlyphs">る(M)</text><rect x="611.6" y="429.2" width="9" height="0.7"/></svg>
<svg class="jt" role="img" aria-label="ページ上の位置を固定" style="left:24.8px;top:215px" width="90.2" height="14.4" viewBox="601.8 434 90.2 14.4" fill="#bdbdbd"><text x="603.8" y="444.85" font-size="9.6" fill="#bdbdbd" text-anchor="start" textLength="86.2" lengthAdjust="spacingAndGlyphs">ページ上の位置を固定</text></svg>
<svg class="jt" role="img" aria-label="(N)" style="left:24.8px;top:228px" width="18.4" height="14.4" viewBox="601.8 447 18.4 14.4" fill="#bdbdbd"><text x="603.8" y="457.85" font-size="9.6" fill="#bdbdbd" text-anchor="start" textLength="14.4" lengthAdjust="spacingAndGlyphs">(N)</text><rect x="607.4" y="458.8" width="7.2" height="0.7"/></svg>
<svg class="jt" role="img" aria-label="詳細表示..." style="left:78.2px;top:253px" width="51.8" height="14.4" viewBox="655.2 472 51.8 14.4" fill="#2a6fd2"><text x="657.2" y="482.85" font-size="9.6" fill="#2a6fd2" text-anchor="start" textLength="47.8" lengthAdjust="spacingAndGlyphs">詳細表示...</text><rect x="657.2" y="484" width="47.8" height="0.7"/></svg>
</div>
<div id="vscroll" style="left:992px;top:162.6px;width:13.4px;height:377px;background:#f1f1f1;border-radius:6px 6px 0 0;">
<svg style="left:0px;top:0px" width="13.4" height="377" viewBox="1001 171.6 13.4 377"><path d="M1004.6 181H1011.8L1008.2 176.2Z" fill="#5c5c5c"/>
<rect x="1004.8" y="215.2" width="6.6" height="142.8" rx="3.3" fill="#6f6f6f"/>
<path d="M1004.4 539H1011.8L1008.1 544.2Z" fill="#5c5c5c"/></svg>
</div>
<div id="statusbar" style="left:0px;top:539px;width:1006px;height:19px;background:#f5f5f5;border-top:1px solid #d4d4d4;">
<svg class="jt" role="img" aria-label="1/1 ページ" style="left:8.6px;top:2.15px" width="45.4" height="14.1" viewBox="17.6 551.15 45.4 14.1" fill="#444"><text x="19.6" y="561.77" font-size="9.4" fill="#444" text-anchor="start" textLength="41.4" lengthAdjust="spacingAndGlyphs">1/1 ページ</text></svg>
<svg class="jt" role="img" aria-label="3 単語" style="left:65.2px;top:2.15px" width="31.8" height="14.1" viewBox="74.2 551.15 31.8 14.1" fill="#444"><text x="76.2" y="561.77" font-size="9.4" fill="#444" text-anchor="start" textLength="27.8" lengthAdjust="spacingAndGlyphs">3 単語</text></svg>
<svg style="left:107px;top:2px" width="16" height="14" viewBox="116 551 16 14"><path d="M124 553.5Q121.6 552.7 119 553.1V561.8H122.3M124 553.5V558.4M124 553.5Q126.5 552.7 129.3 553.1V556.9M123 560.2L125.5 562.6L129.9 558.4" fill="none" stroke="#444" stroke-width="1.1" stroke-linejoin="round" stroke-linecap="round"/></svg>
<svg class="jt" role="img" aria-label="英語 (米国)" style="left:133px;top:2.15px" width="53" height="14.1" viewBox="142 551.15 53 14.1" fill="#444"><text x="144" y="561.77" font-size="9.4" fill="#444" text-anchor="start" textLength="49" lengthAdjust="spacingAndGlyphs">英語 (米国)</text></svg>
<svg class="jt" role="img" aria-label="予測入力: オン" style="left:196.6px;top:2.15px" width="63.4" height="14.1" viewBox="205.6 551.15 63.4 14.1" fill="#444"><text x="207.6" y="561.77" font-size="9.4" fill="#444" text-anchor="start" textLength="59.4" lengthAdjust="spacingAndGlyphs">予測入力: オン</text></svg>
<svg style="left:271px;top:2px" width="16" height="14" viewBox="280 551 16 14"><rect x="282.8" y="553.2" width="10.6" height="8.8" fill="#e6e6e6" stroke="#4a4a4a" stroke-width="1"/><rect x="282.3" y="552.7" width="11.6" height="2.3" fill="#555"/><circle cx="290.2" cy="559.5" r="4.3" fill="#f5f5f5"/><circle cx="290.2" cy="559.5" r="3.3" fill="#f7f7f7" stroke="#3a3a3a" stroke-width="1.05"/><circle cx="290.2" cy="559.5" r="1.35" fill="#111"/></svg>
<svg style="left:296px;top:2px" width="16" height="14" viewBox="305 551 16 14"><path d="M307.9 554.8L312.3 555.9L316.7 554.8M312.3 555.9V558.4M312.3 558.4L309.8 562.3M312.3 558.4L313.6 560.3" fill="none" stroke="#444" stroke-width="2" stroke-linecap="round" stroke-linejoin="round"/><path d="M307.9 554.8L312.3 555.9L316.7 554.8M312.3 555.9V558.4M312.3 558.4L309.8 562.3M312.3 558.4L313.6 560.3" fill="none" stroke="#f5f5f5" stroke-width="0.6" stroke-linecap="round" stroke-linejoin="round"/><circle cx="312.3" cy="553.3" r="1.25" fill="#f5f5f5" stroke="#444" stroke-width="0.8"/><path d="M314.2 558.6L318.4 562.8M318.4 558.6L314.2 562.8" stroke="#444" stroke-width="1.1"/></svg>
<svg class="jt" role="img" aria-label="アクセシビリティ: 検討が必要です" style="left:310.6px;top:2.15px" width="133.8" height="14.1" viewBox="319.6 551.15 133.8 14.1" fill="#333"><text x="321.6" y="561.77" font-size="9.4" fill="#333" text-anchor="start" textLength="129.8" lengthAdjust="spacingAndGlyphs" style="font-weight:bold;">アクセシビリティ: 検討が必要です</text></svg>
<svg style="left:628px;top:2px" width="16" height="14" viewBox="637 551 16 14"><path d="M644 560.4H640.2Q639.4 560.4 639.4 559.6V553.6Q639.4 552.8 640.2 552.8H649.4Q650.2 552.8 650.2 553.6V556.4" fill="none" stroke="#3c3c3c" stroke-width="1.15"/><circle cx="647.6" cy="560.2" r="2" fill="#fff" stroke="#333" stroke-width="1.3"/><path d="M647.6 556.8V563.6M644.2 560.2H651M645.2 557.8L650 562.6M650 557.8L645.2 562.6" stroke="#333" stroke-width="0.9"/><circle cx="647.6" cy="560.2" r="0.9" fill="#f5f5f5"/></svg>
<svg class="jt" role="img" aria-label="表示設定" style="left:641.6px;top:2.15px" width="41.4" height="14.1" viewBox="650.6 551.15 41.4 14.1" fill="#444"><text x="652.6" y="561.77" font-size="9.4" fill="#444" text-anchor="start" textLength="37.4" lengthAdjust="spacingAndGlyphs">表示設定</text></svg>
<svg style="left:692px;top:2px" width="16" height="14" viewBox="701 551 16 14"><path d="M703.4 555.4V553H705.8M712 553H714.4V555.4M714.4 560.8V563.2H712M705.8 563.2H703.4V560.8" fill="none" stroke="#3c3c3c" stroke-width="1.1"/><path d="M706.4 554.8H709.8L711.6 556.6V561.4H706.4Z" fill="none" stroke="#3c3c3c" stroke-width="1.1" stroke-linejoin="round"/></svg>
<svg class="jt" role="img" aria-label="フォーカス" style="left:706px;top:2.15px" width="37.6" height="14.1" viewBox="715 551.15 37.6 14.1" fill="#444"><text x="717" y="561.77" font-size="9.4" fill="#444" text-anchor="start" textLength="33.6" lengthAdjust="spacingAndGlyphs">フォーカス</text></svg>
<svg style="left:759px;top:2px" width="16" height="14" viewBox="768 551 16 14"><path d="M775.5 553.3Q773.4 552.2 770.7 552.5V561.2Q773.4 560.9 775.5 562Q777.6 560.9 780.3 561.2V552.5Q777.6 552.2 775.5 553.3Z" fill="#d2d2d2" stroke="#444" stroke-width="1.05" stroke-linejoin="round"/><path d="M775.5 553.3V562.4" stroke="#444" stroke-width="1"/><path d="M772.2 554.8H774M772.2 556.8H774M772.2 558.8H774M777 554.8H778.8M777 556.8H778.8M777 558.8H778.8" stroke="#555" stroke-width="0.7"/></svg>
<div style="left:783.4px;top:0.6px;width:31.6px;height:17.4px;background:#dcdcdc;"></div>
<svg style="left:791px;top:2px" width="16" height="14" viewBox="800 551 16 14"><rect x="803.6" y="552.4" width="8" height="10.4" fill="#cfcfcf" stroke="#3f3f3f" stroke-width="1.15"/><path d="M805 554.4H810.2M805 555.9H810.2M805 557.4H810.2M805 558.9H810.2M805 560.4H810.2" stroke="#777" stroke-width="0.6"/><path d="M804.6 561.7H810.6" stroke="#f2f2f2" stroke-width="0.8"/></svg>
<svg style="left:823px;top:2px" width="16" height="14" viewBox="832 551 16 14"><rect x="834.9" y="552.4" width="9.4" height="9.8" fill="#cdcdcd" stroke="#444" stroke-width="1"/><path d="M834.9 554.2H844.3" stroke="#444" stroke-width="1"/><path d="M836.4 556.4H838.4M836.4 558.2H838M836.4 560H838" stroke="#666" stroke-width="0.7"/><circle cx="842.3" cy="559.7" r="3.8" fill="#2e2e2e"/><path d="M838.7 559.7H845.9M842.3 556.1V563.3" stroke="#d8d8d8" stroke-width="0.55"/><ellipse cx="842.3" cy="559.7" rx="1.5" ry="3.6" fill="none" stroke="#d8d8d8" stroke-width="0.5"/></svg>
<svg style="left:849px;top:2px" width="108" height="14" viewBox="858 551 108 14"><path d="M861.4 557.8H867" stroke="#6a6a6a" stroke-width="0.9"/><path d="M871.8 557.8H951.2" stroke="#7a7a7a" stroke-width="0.9"/><rect x="909.6" y="553.6" width="4.2" height="8.8" rx="0.8" fill="#555"/><path d="M955.8 557.6H962M958.9 554.5V560.7" stroke="#6a6a6a" stroke-width="0.9"/></svg>
<svg class="lt" style="left:961.07px;top:-1.2px" width="31.3" height="20.4" viewBox="970.07 547.8 31.3 20.4"><text x="972.07" y="561.51" font-size="10.2" fill="#444" text-anchor="start" textLength="28.03" lengthAdjust="spacingAndGlyphs">100%</text></svg>
</div>
</div>
<svg class="frame" style="left:0px;top:0px" width="1024" height="576" viewBox="0 0 1024 576"><rect x="9.5" y="9.5" width="1005.2" height="557.1" rx="7.6" fill="none" stroke="#4f80d0" stroke-width="1"/><path d="M1014.7 50V558" stroke="#eef1f6" stroke-opacity="0.45" stroke-width="1.2"/></svg>
</div>
</body></html>
